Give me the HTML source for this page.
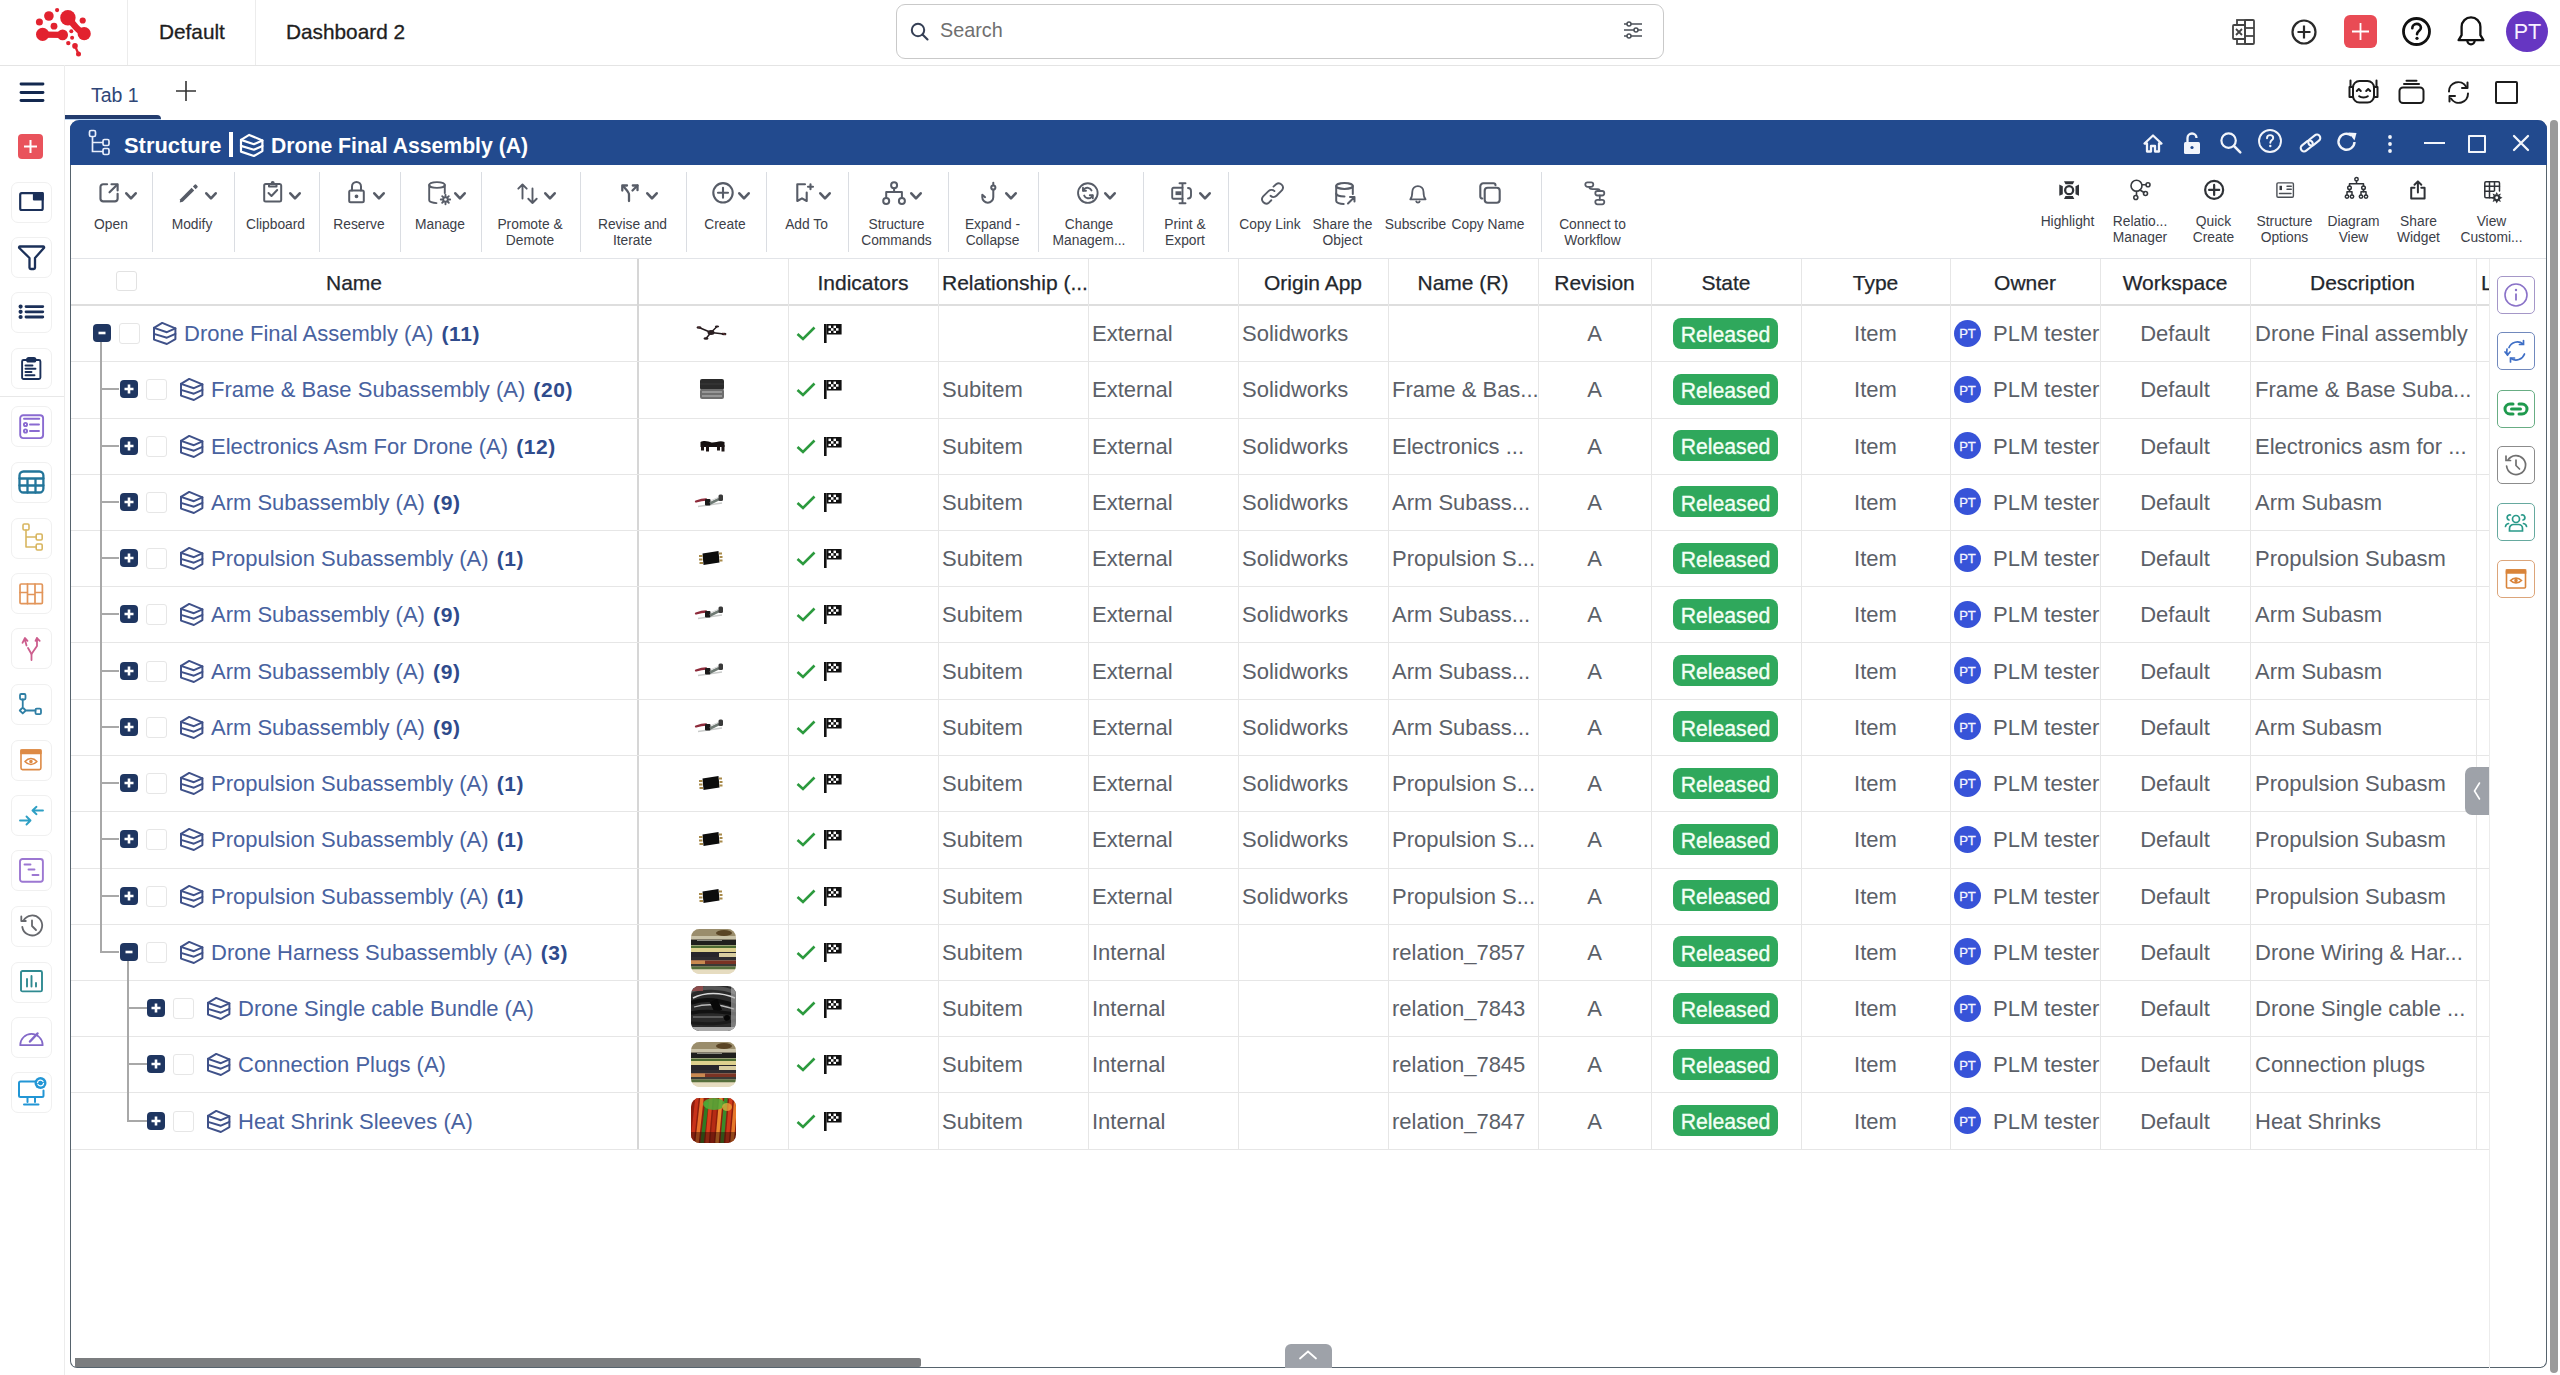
<!DOCTYPE html>
<html><head><meta charset="utf-8"><title>Structure</title>
<style>
html,body{margin:0;padding:0;}
body{width:2560px;height:1375px;position:relative;overflow:hidden;background:#fff;font-family:"Liberation Sans",sans-serif;}
.a{position:absolute;box-sizing:border-box;}
.t{position:absolute;line-height:1;white-space:nowrap;}
svg.a{overflow:visible;}
</style></head><body>
<div class="a" style="left:0px;top:65px;width:2560px;height:1px;background:#e4e4e4;"></div><div class="a" style="left:127px;top:0px;width:1px;height:65px;background:#ececec;"></div><div class="a" style="left:255px;top:0px;width:1px;height:65px;background:#ececec;"></div><svg class="a" style="left:30px;top:4px;" width="66" height="56" viewBox="0 0 66 56"><g fill="#e2222f" stroke="#e2222f">
<circle cx="27.1" cy="6.1" r="2.1" stroke="none"/>
<circle cx="18.9" cy="12" r="4.8" stroke="none"/>
<circle cx="9.4" cy="18.1" r="3.5" stroke="none"/>
<circle cx="24" cy="22.2" r="3.4" stroke="none"/>
<circle cx="37.9" cy="13.8" r="7.7" stroke="none"/>
<circle cx="52.7" cy="16.5" r="3.1" stroke="none"/>
<circle cx="54.2" cy="29.7" r="6.6" stroke="none"/>
<path d="M37.9 13.8 C44 20 46 26 54.2 29.7" fill="none" stroke-width="6.5" stroke-linecap="round"/>
<circle cx="12.6" cy="30.3" r="6.6" stroke="none"/>
<circle cx="32.6" cy="30.9" r="5.4" stroke="none"/>
<path d="M12.6 30.6 L32.6 30.9" stroke-width="6.2"/>
<circle cx="41.3" cy="27.3" r="2" stroke="none"/>
<circle cx="42.1" cy="33.8" r="2" stroke="none"/>
<circle cx="38.3" cy="39.1" r="2.2" stroke="none"/>
<circle cx="45" cy="41.9" r="2.8" stroke="none"/>
<circle cx="48.5" cy="50.1" r="2.5" stroke="none"/>
<path d="M45 41.9 L48.5 50.1" stroke-width="2.4"/>
</g></svg><div class="t " style="top:21.59px;font-size:20.8px;color:#1e1e1e;left:159.00px;-webkit-text-stroke:0.3px #1e1e1e;">Default</div><div class="t " style="top:21.59px;font-size:20.8px;color:#1e1e1e;left:286.00px;-webkit-text-stroke:0.3px #1e1e1e;">Dashboard 2</div><div class="a" style="left:896px;top:4px;width:768px;height:55px;border:1.5px solid #c9c9c9;border-radius:9px;background:#fff;"></div><svg class="a" style="left:910px;top:22px;" width="20" height="20" viewBox="0 0 20 20"><circle cx="8" cy="8" r="6.2" fill="none" stroke="#353f55" stroke-width="2"/><line x1="12.5" y1="12.5" x2="17.5" y2="17.5" stroke="#353f55" stroke-width="2.1" stroke-linecap="round"/></svg><div class="t " style="top:21.24px;font-size:19.8px;color:#6f6f6f;left:940.00px;">Search</div><svg class="a" style="left:1622px;top:20px;" width="22" height="22" viewBox="0 0 22 22"><g stroke="#4a4f57" stroke-width="1.5" fill="#fff"><line x1="2" y1="4" x2="20" y2="4"/><line x1="2" y1="10" x2="20" y2="10"/><line x1="2" y1="16" x2="20" y2="16"/><circle cx="7" cy="4" r="2"/><circle cx="14" cy="10" r="2"/><circle cx="7" cy="16" r="2"/></g></svg><svg class="a" style="left:2232px;top:19px;" width="25" height="26" viewBox="0 0 25 26"><g fill="none" stroke="#444" stroke-width="1.8"><rect x="1" y="6" width="12" height="14" rx="1"/><rect x="5" y="1" width="8" height="5"/><rect x="5" y="20" width="8" height="5"/><rect x="13" y="1" width="9" height="24" rx="1"/><line x1="13" y1="9" x2="22" y2="9"/><line x1="13" y1="17" x2="22" y2="17"/></g><path d="M4 10 L10 16 M10 10 L4 16" stroke="#444" stroke-width="1.8"/></svg><svg class="a" style="left:2291px;top:19px;" width="26" height="26" viewBox="0 0 26 26"><circle cx="13" cy="13" r="11.5" fill="none" stroke="#2a2a2a" stroke-width="2.2"/><path d="M13 6.5v13M6.5 13h13" stroke="#2a2a2a" stroke-width="2.2"/></svg><div class="a" style="left:2344px;top:15px;width:33px;height:33px;background:#e94b55;border-radius:6px;"></div><svg class="a" style="left:2344px;top:15px;" width="33" height="33" viewBox="0 0 33 33"><path d="M16.5 8v17M8 16.5h17" stroke="#fff" stroke-width="1.8"/></svg><svg class="a" style="left:2402px;top:17px;" width="29" height="29" viewBox="0 0 29 29"><circle cx="14.5" cy="14.5" r="13" fill="none" stroke="#111" stroke-width="2.8"/><path d="M10.3 11.2c0-2.6 1.9-4.3 4.3-4.3 2.5 0 4.3 1.7 4.3 3.9 0 2.8-3.6 3.1-3.9 6.4" fill="none" stroke="#111" stroke-width="2.6" stroke-linecap="round"/><circle cx="15" cy="21.3" r="1.6" fill="#111"/></svg><svg class="a" style="left:2457px;top:15px;" width="28" height="32" viewBox="0 0 28 32"><g fill="none" stroke="#111" stroke-width="2.3" stroke-linejoin="round"><path d="M1.6 25.2 L4.6 20.2 V11.8 A9.4 9.4 0 0 1 23.4 11.8 V20.2 L26.4 25.2 Z"/><path d="M10.3 25.6 A3.7 3.7 0 0 0 17.7 25.6"/></g></svg><div class="a" style="left:2506px;top:11px;width:42px;height:41px;background:#6636c2;border-radius:50%;"></div><div class="t " style="top:21.60px;font-size:21.5px;color:#f7f0ff;left:2497.50px;width:60px;text-align:center;">PT</div><div class="a" style="left:64px;top:65px;width:1px;height:1310px;background:#ececec;"></div><svg class="a" style="left:19px;top:81px;" width="26" height="22" viewBox="0 0 26 22"><g stroke="#13284f" stroke-width="2.8" stroke-linecap="round"><line x1="2" y1="3" x2="24" y2="3"/><line x1="2" y1="11.5" x2="24" y2="11.5"/><line x1="2" y1="19.5" x2="24" y2="19.5"/></g></svg><div class="a" style="left:18px;top:134px;width:25px;height:25px;background:#e9535c;border-radius:4px;"></div><svg class="a" style="left:18px;top:134px;" width="25" height="25" viewBox="0 0 25 25"><path d="M12.5 6v13M6 12.5h13" stroke="#fff" stroke-width="2"/></svg><div class="a" style="left:0px;top:396px;width:64px;height:1px;background:#e8e8e8;"></div><div class="a" style="left:11px;top:182px;width:41px;height:41px;border:1px solid #f0f0f0;border-radius:7px;background:#fff;"></div><div class="a" style="left:11px;top:237px;width:41px;height:41px;border:1px solid #f0f0f0;border-radius:7px;background:#fff;"></div><div class="a" style="left:11px;top:292px;width:41px;height:41px;border:1px solid #f0f0f0;border-radius:7px;background:#fff;"></div><div class="a" style="left:11px;top:348px;width:41px;height:41px;border:1px solid #f0f0f0;border-radius:7px;background:#fff;"></div><div class="a" style="left:11px;top:406px;width:41px;height:41px;border:1px solid #f0f0f0;border-radius:7px;background:#fff;"></div><div class="a" style="left:11px;top:462px;width:41px;height:41px;border:1px solid #f0f0f0;border-radius:7px;background:#fff;"></div><div class="a" style="left:11px;top:518px;width:41px;height:41px;border:1px solid #f0f0f0;border-radius:7px;background:#fff;"></div><div class="a" style="left:11px;top:573px;width:41px;height:41px;border:1px solid #f0f0f0;border-radius:7px;background:#fff;"></div><div class="a" style="left:11px;top:628px;width:41px;height:41px;border:1px solid #f0f0f0;border-radius:7px;background:#fff;"></div><div class="a" style="left:11px;top:684px;width:41px;height:41px;border:1px solid #f0f0f0;border-radius:7px;background:#fff;"></div><div class="a" style="left:11px;top:740px;width:41px;height:41px;border:1px solid #f0f0f0;border-radius:7px;background:#fff;"></div><div class="a" style="left:11px;top:795px;width:41px;height:41px;border:1px solid #f0f0f0;border-radius:7px;background:#fff;"></div><div class="a" style="left:11px;top:850px;width:41px;height:41px;border:1px solid #f0f0f0;border-radius:7px;background:#fff;"></div><div class="a" style="left:11px;top:906px;width:41px;height:41px;border:1px solid #f0f0f0;border-radius:7px;background:#fff;"></div><div class="a" style="left:11px;top:962px;width:41px;height:41px;border:1px solid #f0f0f0;border-radius:7px;background:#fff;"></div><div class="a" style="left:11px;top:1017px;width:41px;height:41px;border:1px solid #f0f0f0;border-radius:7px;background:#fff;"></div><div class="a" style="left:11px;top:1072px;width:41px;height:41px;border:1px solid #f0f0f0;border-radius:7px;background:#fff;"></div><div class="t " style="top:85.69px;font-size:19.5px;color:#2f4677;left:91.00px;">Tab 1</div><div class="a" style="left:65px;top:115px;width:96px;height:3.7px;background:#233c6e;border-radius:0 4px 0 0;"></div><div class="a" style="left:65px;top:118.7px;width:96px;height:1.3px;background:#b8d4f4;"></div><svg class="a" style="left:175px;top:80px;" width="22" height="22" viewBox="0 0 22 22"><path d="M11 1v20M1 11h20" stroke="#333" stroke-width="1.6"/></svg><svg class="a" style="left:2347px;top:79px;" width="33" height="25" viewBox="0 0 33 25"><g fill="none" stroke="#1c1c1c" stroke-width="2" stroke-linecap="round" stroke-linejoin="round"><rect x="6" y="2" width="21" height="21.5" rx="6.5"/><path d="M6 8H2.5v10H6M27 8h3.5v10H27"/><path d="M3.5 8V1.5M29.5 8V1.5"/><path d="M12.2 17.2c1.8 1.6 6.8 1.6 8.6 0"/><path d="M9.8 12l2-2 2 2M19.2 12l2-2 2 2"/></g></svg><svg class="a" style="left:2398px;top:79px;" width="27" height="25" viewBox="0 0 27 25"><g fill="none" stroke="#1c1c1c" stroke-width="2" stroke-linecap="round"><rect x="1.5" y="8.5" width="24" height="15.5" rx="3.5"/><line x1="6" y1="5" x2="21" y2="5"/><line x1="8.5" y1="1.8" x2="18.5" y2="1.8"/></g></svg><svg class="a" style="left:2447px;top:81px;" width="24" height="22" viewBox="0 0 24 22"><g fill="none" stroke="#1c1c1c" stroke-width="2" stroke-linecap="round" stroke-linejoin="round"><path d="M2 10.5A9.2 9.2 0 0 1 19 5.5"/><path d="M20.5 1.5v5.5h-5.5"/><path d="M21 12.5A9.2 9.2 0 0 1 4 17.5"/><path d="M2.5 20.5v-5.5h5.5"/></g></svg><div class="a" style="left:2495px;top:81px;width:23px;height:23px;border:2.2px solid #1c1c1c;border-radius:2px;"></div><div class="a" style="left:70px;top:120px;width:2477px;height:1248px;border:1.4px solid #56636d;border-top:none;border-radius:9px 9px 7px 7px;background:#fff;"></div><div class="a" style="left:70px;top:120px;width:2477px;height:45px;background:#224a8e;border-radius:9px 9px 0 0;"></div><svg class="a" style="left:88px;top:129px;" width="24" height="27" viewBox="0 0 24 27"><g fill="none" stroke="#e8eefb" stroke-width="1.7"><rect x="1.5" y="1.5" width="6" height="6" rx="1.5"/><rect x="15" y="10.5" width="6" height="6" rx="1.5"/><rect x="15" y="19.5" width="6" height="6" rx="1.5"/><path d="M4.5 7.5V22.5H15M4.5 13.5H15"/></g></svg><div class="t " style="top:134.66px;font-size:21.9px;color:#ffffff;font-weight:bold;left:124.00px;">Structure</div><div class="a" style="left:229px;top:132px;width:3.5px;height:25px;background:#fff;"></div><svg class="a" style="left:240px;top:134px;" width="24" height="23" viewBox="0 0 24 23"><g fill="none" stroke="#fff" stroke-width="2.2" stroke-linejoin="round" stroke-linecap="round"><path d="M9.2 0.9 L22.4 6.4 L22.4 17.1 L13.9 22 L1 17.6 L1 5.9 Z"/><path d="M1 5.9 L13.9 10.2 L22.4 6.4"/><path d="M1 11.9 L13.9 15.7 L22.4 11.9"/></g></svg><div class="t " style="top:135.25px;font-size:21.2px;color:#ffffff;font-weight:bold;left:271.00px;">Drone Final Assembly (A)</div><svg class="a" style="left:2143px;top:134px;" width="20" height="19" viewBox="0 0 20 19"><path d="M10 1.5 L18.5 9.5 H16 V17.5 H12 V12 H8 V17.5 H4 V9.5 H1.5 Z" fill="none" stroke="#f2f5fb" stroke-width="2.3" stroke-linejoin="round"/></svg><svg class="a" style="left:2183px;top:132px;" width="18" height="23" viewBox="0 0 18 23"><path d="M4.5 10V6a4.5 4.5 0 0 1 9 0" fill="none" stroke="#f2f5fb" stroke-width="2.3"/><rect x="1" y="10" width="16" height="12" rx="1.5" fill="#f2f5fb"/><circle cx="9" cy="15.5" r="1.6" fill="#224a8e"/></svg><svg class="a" style="left:2220px;top:132px;" width="22" height="22" viewBox="0 0 22 22"><circle cx="8.6" cy="8.6" r="7.2" fill="none" stroke="#f2f5fb" stroke-width="2.2"/><line x1="14" y1="14" x2="20.3" y2="20.3" stroke="#f2f5fb" stroke-width="2.5" stroke-linecap="round"/></svg><svg class="a" style="left:2258px;top:129px;" width="24" height="24" viewBox="0 0 24 24"><circle cx="12" cy="12" r="11" fill="none" stroke="#f2f5fb" stroke-width="1.9"/><path d="M9 9.2c0-1.9 1.4-3.1 3.1-3.1 1.8 0 3.1 1.2 3.1 2.8 0 2.1-2.7 2.2-2.9 4.8" fill="none" stroke="#f2f5fb" stroke-width="1.9" stroke-linecap="round"/><circle cx="12.3" cy="17" r="1.2" fill="#f2f5fb"/></svg><svg class="a" style="left:2298px;top:132px;" width="25" height="22" viewBox="0 0 25 22"><g fill="none" stroke="#f2f5fb" stroke-width="2.1" transform="rotate(-38 12.5 11)"><rect x="1" y="7.6" width="13.5" height="6.8" rx="3.4"/><rect x="10.5" y="7.6" width="13.5" height="6.8" rx="3.4"/></g></svg><svg class="a" style="left:2336px;top:131px;" width="22" height="22" viewBox="0 0 22 22"><path d="M18.5 11 A8 8 0 1 1 15.5 4.5" fill="none" stroke="#f2f5fb" stroke-width="2.4"/><path d="M12.5 1.5 L20.5 2 L18.5 9.5 Z" fill="#f2f5fb"/></svg><svg class="a" style="left:2386px;top:134px;" width="8" height="20" viewBox="0 0 8 20"><g fill="#f2f5fb"><circle cx="4" cy="3" r="1.9"/><circle cx="4" cy="10" r="1.9"/><circle cx="4" cy="17" r="1.9"/></g></svg><div class="a" style="left:2424px;top:142px;width:21px;height:2.4px;background:#f2f5fb;"></div><div class="a" style="left:2468px;top:135px;width:18px;height:18px;border:2.3px solid #f2f5fb;border-radius:1px;"></div><svg class="a" style="left:2512px;top:134px;" width="18" height="18" viewBox="0 0 18 18"><path d="M2 2L16 16M16 2L2 16" stroke="#f2f5fb" stroke-width="2.3" stroke-linecap="round"/></svg><div class="a" style="left:71px;top:258px;width:2475px;height:1px;background:#e2e4e8;"></div><div class="a" style="left:152px;top:172px;width:1px;height:80px;background:#dadde2;"></div><div class="a" style="left:234px;top:172px;width:1px;height:80px;background:#dadde2;"></div><div class="a" style="left:319px;top:172px;width:1px;height:80px;background:#dadde2;"></div><div class="a" style="left:400px;top:172px;width:1px;height:80px;background:#dadde2;"></div><div class="a" style="left:481px;top:172px;width:1px;height:80px;background:#dadde2;"></div><div class="a" style="left:580px;top:172px;width:1px;height:80px;background:#dadde2;"></div><div class="a" style="left:686px;top:172px;width:1px;height:80px;background:#dadde2;"></div><div class="a" style="left:766px;top:172px;width:1px;height:80px;background:#dadde2;"></div><div class="a" style="left:848px;top:172px;width:1px;height:80px;background:#dadde2;"></div><div class="a" style="left:948px;top:172px;width:1px;height:80px;background:#dadde2;"></div><div class="a" style="left:1038px;top:172px;width:1px;height:80px;background:#dadde2;"></div><div class="a" style="left:1143px;top:172px;width:1px;height:80px;background:#dadde2;"></div><div class="a" style="left:1228px;top:172px;width:1px;height:80px;background:#dadde2;"></div><div class="a" style="left:1541px;top:172px;width:1px;height:80px;background:#dadde2;"></div><div class="t " style="top:217.52px;font-size:13.8px;color:#3c4048;left:41.00px;width:140px;text-align:center;">Open</div><div class="t " style="top:217.52px;font-size:13.8px;color:#3c4048;left:122.00px;width:140px;text-align:center;">Modify</div><div class="t " style="top:217.52px;font-size:13.8px;color:#3c4048;left:205.50px;width:140px;text-align:center;">Clipboard</div><div class="t " style="top:217.52px;font-size:13.8px;color:#3c4048;left:289.00px;width:140px;text-align:center;">Reserve</div><div class="t " style="top:217.52px;font-size:13.8px;color:#3c4048;left:370.00px;width:140px;text-align:center;">Manage</div><div class="t " style="top:217.52px;font-size:13.8px;color:#3c4048;left:460.00px;width:140px;text-align:center;">Promote &amp;</div><div class="t " style="top:233.52px;font-size:13.8px;color:#3c4048;left:460.00px;width:140px;text-align:center;">Demote</div><div class="t " style="top:217.52px;font-size:13.8px;color:#3c4048;left:562.50px;width:140px;text-align:center;">Revise and</div><div class="t " style="top:233.52px;font-size:13.8px;color:#3c4048;left:562.50px;width:140px;text-align:center;">Iterate</div><div class="t " style="top:217.52px;font-size:13.8px;color:#3c4048;left:655.00px;width:140px;text-align:center;">Create</div><div class="t " style="top:217.52px;font-size:13.8px;color:#3c4048;left:736.50px;width:140px;text-align:center;">Add To</div><div class="t " style="top:217.52px;font-size:13.8px;color:#3c4048;left:826.50px;width:140px;text-align:center;">Structure</div><div class="t " style="top:233.52px;font-size:13.8px;color:#3c4048;left:826.50px;width:140px;text-align:center;">Commands</div><div class="t " style="top:217.52px;font-size:13.8px;color:#3c4048;left:922.50px;width:140px;text-align:center;">Expand -</div><div class="t " style="top:233.52px;font-size:13.8px;color:#3c4048;left:922.50px;width:140px;text-align:center;">Collapse</div><div class="t " style="top:217.52px;font-size:13.8px;color:#3c4048;left:1019.00px;width:140px;text-align:center;">Change</div><div class="t " style="top:233.52px;font-size:13.8px;color:#3c4048;left:1019.00px;width:140px;text-align:center;">Managem...</div><div class="t " style="top:217.52px;font-size:13.8px;color:#3c4048;left:1115.00px;width:140px;text-align:center;">Print &amp;</div><div class="t " style="top:233.52px;font-size:13.8px;color:#3c4048;left:1115.00px;width:140px;text-align:center;">Export</div><div class="t " style="top:217.52px;font-size:13.8px;color:#3c4048;left:1200.00px;width:140px;text-align:center;">Copy Link</div><div class="t " style="top:217.52px;font-size:13.8px;color:#3c4048;left:1272.50px;width:140px;text-align:center;">Share the</div><div class="t " style="top:233.52px;font-size:13.8px;color:#3c4048;left:1272.50px;width:140px;text-align:center;">Object</div><div class="t " style="top:217.52px;font-size:13.8px;color:#3c4048;left:1345.50px;width:140px;text-align:center;">Subscribe</div><div class="t " style="top:217.52px;font-size:13.8px;color:#3c4048;left:1418.00px;width:140px;text-align:center;">Copy Name</div><div class="t " style="top:217.52px;font-size:13.8px;color:#3c4048;left:1522.50px;width:140px;text-align:center;">Connect to</div><div class="t " style="top:233.52px;font-size:13.8px;color:#3c4048;left:1522.50px;width:140px;text-align:center;">Workflow</div><div class="t " style="top:215.02px;font-size:13.8px;color:#3c4048;left:1997.50px;width:140px;text-align:center;">Highlight</div><div class="t " style="top:215.02px;font-size:13.8px;color:#3c4048;left:2070.00px;width:140px;text-align:center;">Relatio...</div><div class="t " style="top:231.02px;font-size:13.8px;color:#3c4048;left:2070.00px;width:140px;text-align:center;">Manager</div><div class="t " style="top:215.02px;font-size:13.8px;color:#3c4048;left:2143.50px;width:140px;text-align:center;">Quick</div><div class="t " style="top:231.02px;font-size:13.8px;color:#3c4048;left:2143.50px;width:140px;text-align:center;">Create</div><div class="t " style="top:215.02px;font-size:13.8px;color:#3c4048;left:2214.50px;width:140px;text-align:center;">Structure</div><div class="t " style="top:231.02px;font-size:13.8px;color:#3c4048;left:2214.50px;width:140px;text-align:center;">Options</div><div class="t " style="top:215.02px;font-size:13.8px;color:#3c4048;left:2283.50px;width:140px;text-align:center;">Diagram</div><div class="t " style="top:231.02px;font-size:13.8px;color:#3c4048;left:2283.50px;width:140px;text-align:center;">View</div><div class="t " style="top:215.02px;font-size:13.8px;color:#3c4048;left:2348.50px;width:140px;text-align:center;">Share</div><div class="t " style="top:231.02px;font-size:13.8px;color:#3c4048;left:2348.50px;width:140px;text-align:center;">Widget</div><div class="t " style="top:215.02px;font-size:13.8px;color:#3c4048;left:2421.50px;width:140px;text-align:center;">View</div><div class="t " style="top:231.02px;font-size:13.8px;color:#3c4048;left:2421.50px;width:140px;text-align:center;">Customi...</div><div class="a" style="left:71px;top:304px;width:2418px;height:2px;background:#dedede;"></div><div class="a" style="left:637px;top:258.5px;width:2px;height:890.25px;background:#d6d6d6;"></div><div class="a" style="left:788px;top:258.5px;width:1px;height:890.25px;background:#e6e6e6;"></div><div class="a" style="left:938px;top:258.5px;width:1px;height:890.25px;background:#e6e6e6;"></div><div class="a" style="left:1088px;top:258.5px;width:1px;height:890.25px;background:#e6e6e6;"></div><div class="a" style="left:1238px;top:258.5px;width:1px;height:890.25px;background:#e6e6e6;"></div><div class="a" style="left:1388px;top:258.5px;width:1px;height:890.25px;background:#e6e6e6;"></div><div class="a" style="left:1538px;top:258.5px;width:1px;height:890.25px;background:#e6e6e6;"></div><div class="a" style="left:1651px;top:258.5px;width:1px;height:890.25px;background:#e6e6e6;"></div><div class="a" style="left:1801px;top:258.5px;width:1px;height:890.25px;background:#e6e6e6;"></div><div class="a" style="left:1950px;top:258.5px;width:1px;height:890.25px;background:#e6e6e6;"></div><div class="a" style="left:2100px;top:258.5px;width:1px;height:890.25px;background:#e6e6e6;"></div><div class="a" style="left:2250px;top:258.5px;width:1px;height:890.25px;background:#e6e6e6;"></div><div class="a" style="left:2476px;top:258.5px;width:1px;height:890.25px;background:#e6e6e6;"></div><div class="a" style="left:2489px;top:258.5px;width:1px;height:1109.5px;background:#ececec;"></div><div class="a" style="left:71px;top:361px;width:2418px;height:1px;background:#e6e6e6;"></div><div class="a" style="left:71px;top:418px;width:2418px;height:1px;background:#e6e6e6;"></div><div class="a" style="left:71px;top:474px;width:2418px;height:1px;background:#e6e6e6;"></div><div class="a" style="left:71px;top:530px;width:2418px;height:1px;background:#e6e6e6;"></div><div class="a" style="left:71px;top:586px;width:2418px;height:1px;background:#e6e6e6;"></div><div class="a" style="left:71px;top:642px;width:2418px;height:1px;background:#e6e6e6;"></div><div class="a" style="left:71px;top:699px;width:2418px;height:1px;background:#e6e6e6;"></div><div class="a" style="left:71px;top:755px;width:2418px;height:1px;background:#e6e6e6;"></div><div class="a" style="left:71px;top:811px;width:2418px;height:1px;background:#e6e6e6;"></div><div class="a" style="left:71px;top:868px;width:2418px;height:1px;background:#e6e6e6;"></div><div class="a" style="left:71px;top:924px;width:2418px;height:1px;background:#e6e6e6;"></div><div class="a" style="left:71px;top:980px;width:2418px;height:1px;background:#e6e6e6;"></div><div class="a" style="left:71px;top:1036px;width:2418px;height:1px;background:#e6e6e6;"></div><div class="a" style="left:71px;top:1092px;width:2418px;height:1px;background:#e6e6e6;"></div><div class="a" style="left:71px;top:1149px;width:2418px;height:1px;background:#e6e6e6;"></div><div class="t " style="top:272.22px;font-size:21px;color:#23272d;left:254.00px;width:200px;text-align:center;-webkit-text-stroke:0.25px #23272d;">Name</div><div class="a" style="left:116px;top:271px;width:21px;height:20px;border:1.3px solid #e2e2e2;border-radius:3px;"></div><div class="t " style="top:272.22px;font-size:21px;color:#23272d;left:788.00px;width:150px;text-align:center;-webkit-text-stroke:0.25px #23272d;">Indicators</div><div class="t " style="top:272.22px;font-size:21px;color:#23272d;left:942.00px;-webkit-text-stroke:0.25px #23272d;">Relationship (...</div><div class="t " style="top:272.22px;font-size:21px;color:#23272d;left:1238.00px;width:150px;text-align:center;-webkit-text-stroke:0.25px #23272d;">Origin App</div><div class="t " style="top:272.22px;font-size:21px;color:#23272d;left:1388.00px;width:150px;text-align:center;-webkit-text-stroke:0.25px #23272d;">Name (R)</div><div class="t " style="top:272.22px;font-size:21px;color:#23272d;left:1538.00px;width:113px;text-align:center;-webkit-text-stroke:0.25px #23272d;">Revision</div><div class="t " style="top:272.22px;font-size:21px;color:#23272d;left:1651.00px;width:150px;text-align:center;-webkit-text-stroke:0.25px #23272d;">State</div><div class="t " style="top:272.22px;font-size:21px;color:#23272d;left:1800.50px;width:150px;text-align:center;-webkit-text-stroke:0.25px #23272d;">Type</div><div class="t " style="top:272.22px;font-size:21px;color:#23272d;left:1950.00px;width:150px;text-align:center;-webkit-text-stroke:0.25px #23272d;">Owner</div><div class="t " style="top:272.22px;font-size:21px;color:#23272d;left:2100.00px;width:150px;text-align:center;-webkit-text-stroke:0.25px #23272d;">Workspace</div><div class="t " style="top:272.22px;font-size:21px;color:#23272d;left:2250.00px;width:225px;text-align:center;-webkit-text-stroke:0.25px #23272d;">Description</div><div class="t " style="top:272.22px;font-size:21px;color:#23272d;left:2481.00px;width:8px;overflow:hidden;white-space:nowrap;-webkit-text-stroke:0.25px #23272d;">L</div><div class="a" style="left:99.5px;top:342px;width:2px;height:610px;background:#a8a8a8;"></div><div class="a" style="left:100px;top:388px;width:19px;height:2px;background:#a8a8a8;"></div><div class="a" style="left:100px;top:445px;width:19px;height:2px;background:#a8a8a8;"></div><div class="a" style="left:100px;top:501px;width:19px;height:2px;background:#a8a8a8;"></div><div class="a" style="left:100px;top:557px;width:19px;height:2px;background:#a8a8a8;"></div><div class="a" style="left:100px;top:613px;width:19px;height:2px;background:#a8a8a8;"></div><div class="a" style="left:100px;top:670px;width:19px;height:2px;background:#a8a8a8;"></div><div class="a" style="left:100px;top:726px;width:19px;height:2px;background:#a8a8a8;"></div><div class="a" style="left:100px;top:782px;width:19px;height:2px;background:#a8a8a8;"></div><div class="a" style="left:100px;top:838px;width:19px;height:2px;background:#a8a8a8;"></div><div class="a" style="left:100px;top:895px;width:19px;height:2px;background:#a8a8a8;"></div><div class="a" style="left:100px;top:951px;width:19px;height:2px;background:#a8a8a8;"></div><div class="a" style="left:126.5px;top:961px;width:2px;height:160px;background:#a8a8a8;"></div><div class="a" style="left:127px;top:1007px;width:20px;height:2px;background:#a8a8a8;"></div><div class="a" style="left:127px;top:1063px;width:20px;height:2px;background:#a8a8a8;"></div><div class="a" style="left:127px;top:1120px;width:20px;height:2px;background:#a8a8a8;"></div><div class="a" style="left:92.5px;top:324px;width:18px;height:18px;background:#1f3661;border-radius:4px;"></div><svg class="a" style="left:92.5px;top:324px;" width="18" height="18" viewBox="0 0 18 18"><path d="M5.5 9h7" stroke="#fff" stroke-width="2.6"/></svg><div class="a" style="left:118.5px;top:323px;width:21px;height:21px;border:1.3px solid #e6e6e6;border-radius:3px;background:#fff;"></div><svg class="a" style="left:153.0px;top:322px;" width="24" height="23" viewBox="0 0 24 23"><g fill="none" stroke="#3f5189" stroke-width="2" stroke-linejoin="round" stroke-linecap="round"><path d="M9.2 0.9 L22.4 6.4 L22.4 17.1 L13.9 22 L1 17.6 L1 5.9 Z"/><path d="M1 5.9 L13.9 10.2 L22.4 6.4"/><path d="M1 11.9 L13.9 15.7 L22.4 11.9"/></g></svg><div class="t " style="top:323.20px;font-size:22px;color:#4862a0;left:184.00px;">Drone Final Assembly (A) <b style="color:#2f4b8c;font-size:21px;letter-spacing:0.6px;margin-left:2px">(11)</b></div><svg class="a" style="left:796px;top:326px;" width="20" height="15" viewBox="0 0 20 15"><path d="M1.5 8 L7 13 L18.5 1.5" fill="none" stroke="#2c9a3e" stroke-width="2.6"/></svg><svg class="a" style="left:824px;top:323px;" width="18" height="20" viewBox="0 0 18 20"><rect x="0" y="1" width="2.6" height="19" fill="#111"/><rect x="2.6" y="1" width="15" height="10.5" fill="#111"/><g fill="#fff"><rect x="4.5" y="2.6" width="2.5" height="2.5"/><rect x="9.5" y="2.6" width="2.5" height="2.5"/><rect x="7" y="5.2" width="2.5" height="2.5"/><rect x="12" y="5.2" width="2.5" height="2.5"/><rect x="4.5" y="7.8" width="2.5" height="2.2"/><rect x="9.5" y="7.8" width="2.5" height="2.2"/></g></svg><div class="t " style="top:323.20px;font-size:22px;color:#5b6068;left:1092.00px;">External</div><div class="t " style="top:323.20px;font-size:22px;color:#5b6068;left:1242.00px;">Solidworks</div><div class="t " style="top:323.20px;font-size:22px;color:#5b6068;left:1544.50px;width:100px;text-align:center;">A</div><div class="a" style="left:1673px;top:318px;width:105px;height:31px;background:#2fa85c;border-radius:8px;"></div><div class="t " style="top:323.88px;font-size:21.2px;color:#f2fff5;left:1673.00px;width:105px;text-align:center;-webkit-text-stroke:0.35px #f2fff5;">Released</div><div class="t " style="top:323.20px;font-size:22px;color:#5b6068;left:1805.50px;width:140px;text-align:center;">Item</div><div class="a" style="left:1954px;top:320px;width:27px;height:27px;background:#3753d8;border-radius:50%;"></div><div class="t " style="top:327.32px;font-size:13px;color:#f4f6ff;left:1952.50px;width:30px;text-align:center;-webkit-text-stroke:0.3px #f4f6ff;">PT</div><div class="t " style="top:323.20px;font-size:22px;color:#5b6068;left:1993.00px;width:107px;overflow:hidden;white-space:nowrap;">PLM tester</div><div class="t " style="top:323.20px;font-size:22px;color:#5b6068;left:2105.00px;width:140px;text-align:center;">Default</div><div class="t " style="top:323.20px;font-size:22px;color:#5b6068;left:2255.00px;">Drone Final assembly</div><div class="a" style="left:119.5px;top:380px;width:18px;height:18px;background:#1f3661;border-radius:4px;"></div><svg class="a" style="left:119.5px;top:380px;" width="18" height="18" viewBox="0 0 18 18"><path d="M9 4.5v9M4.5 9h9" stroke="#fff" stroke-width="2.6"/></svg><div class="a" style="left:145.5px;top:379px;width:21px;height:21px;border:1.3px solid #e6e6e6;border-radius:3px;background:#fff;"></div><svg class="a" style="left:180.0px;top:378px;" width="24" height="23" viewBox="0 0 24 23"><g fill="none" stroke="#3f5189" stroke-width="2" stroke-linejoin="round" stroke-linecap="round"><path d="M9.2 0.9 L22.4 6.4 L22.4 17.1 L13.9 22 L1 17.6 L1 5.9 Z"/><path d="M1 5.9 L13.9 10.2 L22.4 6.4"/><path d="M1 11.9 L13.9 15.7 L22.4 11.9"/></g></svg><div class="t " style="top:379.45px;font-size:22px;color:#4862a0;left:211.00px;">Frame &amp; Base Subassembly (A) <b style="color:#2f4b8c;font-size:21px;letter-spacing:0.6px;margin-left:2px">(20)</b></div><svg class="a" style="left:796px;top:382px;" width="20" height="15" viewBox="0 0 20 15"><path d="M1.5 8 L7 13 L18.5 1.5" fill="none" stroke="#2c9a3e" stroke-width="2.6"/></svg><svg class="a" style="left:824px;top:379px;" width="18" height="20" viewBox="0 0 18 20"><rect x="0" y="1" width="2.6" height="19" fill="#111"/><rect x="2.6" y="1" width="15" height="10.5" fill="#111"/><g fill="#fff"><rect x="4.5" y="2.6" width="2.5" height="2.5"/><rect x="9.5" y="2.6" width="2.5" height="2.5"/><rect x="7" y="5.2" width="2.5" height="2.5"/><rect x="12" y="5.2" width="2.5" height="2.5"/><rect x="4.5" y="7.8" width="2.5" height="2.2"/><rect x="9.5" y="7.8" width="2.5" height="2.2"/></g></svg><div class="t " style="top:379.45px;font-size:22px;color:#5b6068;left:942.00px;">Subitem</div><div class="t " style="top:379.45px;font-size:22px;color:#5b6068;left:1092.00px;">External</div><div class="t " style="top:379.45px;font-size:22px;color:#5b6068;left:1242.00px;">Solidworks</div><div class="t " style="top:379.45px;font-size:22px;color:#5b6068;left:1392.00px;">Frame &amp; Bas...</div><div class="t " style="top:379.45px;font-size:22px;color:#5b6068;left:1544.50px;width:100px;text-align:center;">A</div><div class="a" style="left:1673px;top:374px;width:105px;height:31px;background:#2fa85c;border-radius:8px;"></div><div class="t " style="top:380.13px;font-size:21.2px;color:#f2fff5;left:1673.00px;width:105px;text-align:center;-webkit-text-stroke:0.35px #f2fff5;">Released</div><div class="t " style="top:379.45px;font-size:22px;color:#5b6068;left:1805.50px;width:140px;text-align:center;">Item</div><div class="a" style="left:1954px;top:376px;width:27px;height:27px;background:#3753d8;border-radius:50%;"></div><div class="t " style="top:383.57px;font-size:13px;color:#f4f6ff;left:1952.50px;width:30px;text-align:center;-webkit-text-stroke:0.3px #f4f6ff;">PT</div><div class="t " style="top:379.45px;font-size:22px;color:#5b6068;left:1993.00px;width:107px;overflow:hidden;white-space:nowrap;">PLM tester</div><div class="t " style="top:379.45px;font-size:22px;color:#5b6068;left:2105.00px;width:140px;text-align:center;">Default</div><div class="t " style="top:379.45px;font-size:22px;color:#5b6068;left:2255.00px;">Frame &amp; Base Suba...</div><div class="a" style="left:119.5px;top:437px;width:18px;height:18px;background:#1f3661;border-radius:4px;"></div><svg class="a" style="left:119.5px;top:437px;" width="18" height="18" viewBox="0 0 18 18"><path d="M9 4.5v9M4.5 9h9" stroke="#fff" stroke-width="2.6"/></svg><div class="a" style="left:145.5px;top:436px;width:21px;height:21px;border:1.3px solid #e6e6e6;border-radius:3px;background:#fff;"></div><svg class="a" style="left:180.0px;top:435px;" width="24" height="23" viewBox="0 0 24 23"><g fill="none" stroke="#3f5189" stroke-width="2" stroke-linejoin="round" stroke-linecap="round"><path d="M9.2 0.9 L22.4 6.4 L22.4 17.1 L13.9 22 L1 17.6 L1 5.9 Z"/><path d="M1 5.9 L13.9 10.2 L22.4 6.4"/><path d="M1 11.9 L13.9 15.7 L22.4 11.9"/></g></svg><div class="t " style="top:435.70px;font-size:22px;color:#4862a0;left:211.00px;">Electronics Asm For Drone (A) <b style="color:#2f4b8c;font-size:21px;letter-spacing:0.6px;margin-left:2px">(12)</b></div><svg class="a" style="left:796px;top:439px;" width="20" height="15" viewBox="0 0 20 15"><path d="M1.5 8 L7 13 L18.5 1.5" fill="none" stroke="#2c9a3e" stroke-width="2.6"/></svg><svg class="a" style="left:824px;top:436px;" width="18" height="20" viewBox="0 0 18 20"><rect x="0" y="1" width="2.6" height="19" fill="#111"/><rect x="2.6" y="1" width="15" height="10.5" fill="#111"/><g fill="#fff"><rect x="4.5" y="2.6" width="2.5" height="2.5"/><rect x="9.5" y="2.6" width="2.5" height="2.5"/><rect x="7" y="5.2" width="2.5" height="2.5"/><rect x="12" y="5.2" width="2.5" height="2.5"/><rect x="4.5" y="7.8" width="2.5" height="2.2"/><rect x="9.5" y="7.8" width="2.5" height="2.2"/></g></svg><div class="t " style="top:435.70px;font-size:22px;color:#5b6068;left:942.00px;">Subitem</div><div class="t " style="top:435.70px;font-size:22px;color:#5b6068;left:1092.00px;">External</div><div class="t " style="top:435.70px;font-size:22px;color:#5b6068;left:1242.00px;">Solidworks</div><div class="t " style="top:435.70px;font-size:22px;color:#5b6068;left:1392.00px;">Electronics ...</div><div class="t " style="top:435.70px;font-size:22px;color:#5b6068;left:1544.50px;width:100px;text-align:center;">A</div><div class="a" style="left:1673px;top:430px;width:105px;height:31px;background:#2fa85c;border-radius:8px;"></div><div class="t " style="top:436.38px;font-size:21.2px;color:#f2fff5;left:1673.00px;width:105px;text-align:center;-webkit-text-stroke:0.35px #f2fff5;">Released</div><div class="t " style="top:435.70px;font-size:22px;color:#5b6068;left:1805.50px;width:140px;text-align:center;">Item</div><div class="a" style="left:1954px;top:432px;width:27px;height:27px;background:#3753d8;border-radius:50%;"></div><div class="t " style="top:439.82px;font-size:13px;color:#f4f6ff;left:1952.50px;width:30px;text-align:center;-webkit-text-stroke:0.3px #f4f6ff;">PT</div><div class="t " style="top:435.70px;font-size:22px;color:#5b6068;left:1993.00px;width:107px;overflow:hidden;white-space:nowrap;">PLM tester</div><div class="t " style="top:435.70px;font-size:22px;color:#5b6068;left:2105.00px;width:140px;text-align:center;">Default</div><div class="t " style="top:435.70px;font-size:22px;color:#5b6068;left:2255.00px;">Electronics asm for ...</div><div class="a" style="left:119.5px;top:493px;width:18px;height:18px;background:#1f3661;border-radius:4px;"></div><svg class="a" style="left:119.5px;top:493px;" width="18" height="18" viewBox="0 0 18 18"><path d="M9 4.5v9M4.5 9h9" stroke="#fff" stroke-width="2.6"/></svg><div class="a" style="left:145.5px;top:492px;width:21px;height:21px;border:1.3px solid #e6e6e6;border-radius:3px;background:#fff;"></div><svg class="a" style="left:180.0px;top:491px;" width="24" height="23" viewBox="0 0 24 23"><g fill="none" stroke="#3f5189" stroke-width="2" stroke-linejoin="round" stroke-linecap="round"><path d="M9.2 0.9 L22.4 6.4 L22.4 17.1 L13.9 22 L1 17.6 L1 5.9 Z"/><path d="M1 5.9 L13.9 10.2 L22.4 6.4"/><path d="M1 11.9 L13.9 15.7 L22.4 11.9"/></g></svg><div class="t " style="top:491.95px;font-size:22px;color:#4862a0;left:211.00px;">Arm Subassembly (A) <b style="color:#2f4b8c;font-size:21px;letter-spacing:0.6px;margin-left:2px">(9)</b></div><svg class="a" style="left:796px;top:495px;" width="20" height="15" viewBox="0 0 20 15"><path d="M1.5 8 L7 13 L18.5 1.5" fill="none" stroke="#2c9a3e" stroke-width="2.6"/></svg><svg class="a" style="left:824px;top:492px;" width="18" height="20" viewBox="0 0 18 20"><rect x="0" y="1" width="2.6" height="19" fill="#111"/><rect x="2.6" y="1" width="15" height="10.5" fill="#111"/><g fill="#fff"><rect x="4.5" y="2.6" width="2.5" height="2.5"/><rect x="9.5" y="2.6" width="2.5" height="2.5"/><rect x="7" y="5.2" width="2.5" height="2.5"/><rect x="12" y="5.2" width="2.5" height="2.5"/><rect x="4.5" y="7.8" width="2.5" height="2.2"/><rect x="9.5" y="7.8" width="2.5" height="2.2"/></g></svg><div class="t " style="top:491.95px;font-size:22px;color:#5b6068;left:942.00px;">Subitem</div><div class="t " style="top:491.95px;font-size:22px;color:#5b6068;left:1092.00px;">External</div><div class="t " style="top:491.95px;font-size:22px;color:#5b6068;left:1242.00px;">Solidworks</div><div class="t " style="top:491.95px;font-size:22px;color:#5b6068;left:1392.00px;">Arm Subass...</div><div class="t " style="top:491.95px;font-size:22px;color:#5b6068;left:1544.50px;width:100px;text-align:center;">A</div><div class="a" style="left:1673px;top:486px;width:105px;height:31px;background:#2fa85c;border-radius:8px;"></div><div class="t " style="top:492.63px;font-size:21.2px;color:#f2fff5;left:1673.00px;width:105px;text-align:center;-webkit-text-stroke:0.35px #f2fff5;">Released</div><div class="t " style="top:491.95px;font-size:22px;color:#5b6068;left:1805.50px;width:140px;text-align:center;">Item</div><div class="a" style="left:1954px;top:488px;width:27px;height:27px;background:#3753d8;border-radius:50%;"></div><div class="t " style="top:496.07px;font-size:13px;color:#f4f6ff;left:1952.50px;width:30px;text-align:center;-webkit-text-stroke:0.3px #f4f6ff;">PT</div><div class="t " style="top:491.95px;font-size:22px;color:#5b6068;left:1993.00px;width:107px;overflow:hidden;white-space:nowrap;">PLM tester</div><div class="t " style="top:491.95px;font-size:22px;color:#5b6068;left:2105.00px;width:140px;text-align:center;">Default</div><div class="t " style="top:491.95px;font-size:22px;color:#5b6068;left:2255.00px;">Arm Subasm</div><div class="a" style="left:119.5px;top:549px;width:18px;height:18px;background:#1f3661;border-radius:4px;"></div><svg class="a" style="left:119.5px;top:549px;" width="18" height="18" viewBox="0 0 18 18"><path d="M9 4.5v9M4.5 9h9" stroke="#fff" stroke-width="2.6"/></svg><div class="a" style="left:145.5px;top:548px;width:21px;height:21px;border:1.3px solid #e6e6e6;border-radius:3px;background:#fff;"></div><svg class="a" style="left:180.0px;top:547px;" width="24" height="23" viewBox="0 0 24 23"><g fill="none" stroke="#3f5189" stroke-width="2" stroke-linejoin="round" stroke-linecap="round"><path d="M9.2 0.9 L22.4 6.4 L22.4 17.1 L13.9 22 L1 17.6 L1 5.9 Z"/><path d="M1 5.9 L13.9 10.2 L22.4 6.4"/><path d="M1 11.9 L13.9 15.7 L22.4 11.9"/></g></svg><div class="t " style="top:548.20px;font-size:22px;color:#4862a0;left:211.00px;">Propulsion Subassembly (A) <b style="color:#2f4b8c;font-size:21px;letter-spacing:0.6px;margin-left:2px">(1)</b></div><svg class="a" style="left:796px;top:551px;" width="20" height="15" viewBox="0 0 20 15"><path d="M1.5 8 L7 13 L18.5 1.5" fill="none" stroke="#2c9a3e" stroke-width="2.6"/></svg><svg class="a" style="left:824px;top:548px;" width="18" height="20" viewBox="0 0 18 20"><rect x="0" y="1" width="2.6" height="19" fill="#111"/><rect x="2.6" y="1" width="15" height="10.5" fill="#111"/><g fill="#fff"><rect x="4.5" y="2.6" width="2.5" height="2.5"/><rect x="9.5" y="2.6" width="2.5" height="2.5"/><rect x="7" y="5.2" width="2.5" height="2.5"/><rect x="12" y="5.2" width="2.5" height="2.5"/><rect x="4.5" y="7.8" width="2.5" height="2.2"/><rect x="9.5" y="7.8" width="2.5" height="2.2"/></g></svg><div class="t " style="top:548.20px;font-size:22px;color:#5b6068;left:942.00px;">Subitem</div><div class="t " style="top:548.20px;font-size:22px;color:#5b6068;left:1092.00px;">External</div><div class="t " style="top:548.20px;font-size:22px;color:#5b6068;left:1242.00px;">Solidworks</div><div class="t " style="top:548.20px;font-size:22px;color:#5b6068;left:1392.00px;">Propulsion S...</div><div class="t " style="top:548.20px;font-size:22px;color:#5b6068;left:1544.50px;width:100px;text-align:center;">A</div><div class="a" style="left:1673px;top:543px;width:105px;height:31px;background:#2fa85c;border-radius:8px;"></div><div class="t " style="top:548.88px;font-size:21.2px;color:#f2fff5;left:1673.00px;width:105px;text-align:center;-webkit-text-stroke:0.35px #f2fff5;">Released</div><div class="t " style="top:548.20px;font-size:22px;color:#5b6068;left:1805.50px;width:140px;text-align:center;">Item</div><div class="a" style="left:1954px;top:545px;width:27px;height:27px;background:#3753d8;border-radius:50%;"></div><div class="t " style="top:552.32px;font-size:13px;color:#f4f6ff;left:1952.50px;width:30px;text-align:center;-webkit-text-stroke:0.3px #f4f6ff;">PT</div><div class="t " style="top:548.20px;font-size:22px;color:#5b6068;left:1993.00px;width:107px;overflow:hidden;white-space:nowrap;">PLM tester</div><div class="t " style="top:548.20px;font-size:22px;color:#5b6068;left:2105.00px;width:140px;text-align:center;">Default</div><div class="t " style="top:548.20px;font-size:22px;color:#5b6068;left:2255.00px;">Propulsion Subasm</div><div class="a" style="left:119.5px;top:605px;width:18px;height:18px;background:#1f3661;border-radius:4px;"></div><svg class="a" style="left:119.5px;top:605px;" width="18" height="18" viewBox="0 0 18 18"><path d="M9 4.5v9M4.5 9h9" stroke="#fff" stroke-width="2.6"/></svg><div class="a" style="left:145.5px;top:604px;width:21px;height:21px;border:1.3px solid #e6e6e6;border-radius:3px;background:#fff;"></div><svg class="a" style="left:180.0px;top:603px;" width="24" height="23" viewBox="0 0 24 23"><g fill="none" stroke="#3f5189" stroke-width="2" stroke-linejoin="round" stroke-linecap="round"><path d="M9.2 0.9 L22.4 6.4 L22.4 17.1 L13.9 22 L1 17.6 L1 5.9 Z"/><path d="M1 5.9 L13.9 10.2 L22.4 6.4"/><path d="M1 11.9 L13.9 15.7 L22.4 11.9"/></g></svg><div class="t " style="top:604.45px;font-size:22px;color:#4862a0;left:211.00px;">Arm Subassembly (A) <b style="color:#2f4b8c;font-size:21px;letter-spacing:0.6px;margin-left:2px">(9)</b></div><svg class="a" style="left:796px;top:607px;" width="20" height="15" viewBox="0 0 20 15"><path d="M1.5 8 L7 13 L18.5 1.5" fill="none" stroke="#2c9a3e" stroke-width="2.6"/></svg><svg class="a" style="left:824px;top:604px;" width="18" height="20" viewBox="0 0 18 20"><rect x="0" y="1" width="2.6" height="19" fill="#111"/><rect x="2.6" y="1" width="15" height="10.5" fill="#111"/><g fill="#fff"><rect x="4.5" y="2.6" width="2.5" height="2.5"/><rect x="9.5" y="2.6" width="2.5" height="2.5"/><rect x="7" y="5.2" width="2.5" height="2.5"/><rect x="12" y="5.2" width="2.5" height="2.5"/><rect x="4.5" y="7.8" width="2.5" height="2.2"/><rect x="9.5" y="7.8" width="2.5" height="2.2"/></g></svg><div class="t " style="top:604.45px;font-size:22px;color:#5b6068;left:942.00px;">Subitem</div><div class="t " style="top:604.45px;font-size:22px;color:#5b6068;left:1092.00px;">External</div><div class="t " style="top:604.45px;font-size:22px;color:#5b6068;left:1242.00px;">Solidworks</div><div class="t " style="top:604.45px;font-size:22px;color:#5b6068;left:1392.00px;">Arm Subass...</div><div class="t " style="top:604.45px;font-size:22px;color:#5b6068;left:1544.50px;width:100px;text-align:center;">A</div><div class="a" style="left:1673px;top:599px;width:105px;height:31px;background:#2fa85c;border-radius:8px;"></div><div class="t " style="top:605.13px;font-size:21.2px;color:#f2fff5;left:1673.00px;width:105px;text-align:center;-webkit-text-stroke:0.35px #f2fff5;">Released</div><div class="t " style="top:604.45px;font-size:22px;color:#5b6068;left:1805.50px;width:140px;text-align:center;">Item</div><div class="a" style="left:1954px;top:601px;width:27px;height:27px;background:#3753d8;border-radius:50%;"></div><div class="t " style="top:608.57px;font-size:13px;color:#f4f6ff;left:1952.50px;width:30px;text-align:center;-webkit-text-stroke:0.3px #f4f6ff;">PT</div><div class="t " style="top:604.45px;font-size:22px;color:#5b6068;left:1993.00px;width:107px;overflow:hidden;white-space:nowrap;">PLM tester</div><div class="t " style="top:604.45px;font-size:22px;color:#5b6068;left:2105.00px;width:140px;text-align:center;">Default</div><div class="t " style="top:604.45px;font-size:22px;color:#5b6068;left:2255.00px;">Arm Subasm</div><div class="a" style="left:119.5px;top:662px;width:18px;height:18px;background:#1f3661;border-radius:4px;"></div><svg class="a" style="left:119.5px;top:662px;" width="18" height="18" viewBox="0 0 18 18"><path d="M9 4.5v9M4.5 9h9" stroke="#fff" stroke-width="2.6"/></svg><div class="a" style="left:145.5px;top:661px;width:21px;height:21px;border:1.3px solid #e6e6e6;border-radius:3px;background:#fff;"></div><svg class="a" style="left:180.0px;top:660px;" width="24" height="23" viewBox="0 0 24 23"><g fill="none" stroke="#3f5189" stroke-width="2" stroke-linejoin="round" stroke-linecap="round"><path d="M9.2 0.9 L22.4 6.4 L22.4 17.1 L13.9 22 L1 17.6 L1 5.9 Z"/><path d="M1 5.9 L13.9 10.2 L22.4 6.4"/><path d="M1 11.9 L13.9 15.7 L22.4 11.9"/></g></svg><div class="t " style="top:660.70px;font-size:22px;color:#4862a0;left:211.00px;">Arm Subassembly (A) <b style="color:#2f4b8c;font-size:21px;letter-spacing:0.6px;margin-left:2px">(9)</b></div><svg class="a" style="left:796px;top:664px;" width="20" height="15" viewBox="0 0 20 15"><path d="M1.5 8 L7 13 L18.5 1.5" fill="none" stroke="#2c9a3e" stroke-width="2.6"/></svg><svg class="a" style="left:824px;top:661px;" width="18" height="20" viewBox="0 0 18 20"><rect x="0" y="1" width="2.6" height="19" fill="#111"/><rect x="2.6" y="1" width="15" height="10.5" fill="#111"/><g fill="#fff"><rect x="4.5" y="2.6" width="2.5" height="2.5"/><rect x="9.5" y="2.6" width="2.5" height="2.5"/><rect x="7" y="5.2" width="2.5" height="2.5"/><rect x="12" y="5.2" width="2.5" height="2.5"/><rect x="4.5" y="7.8" width="2.5" height="2.2"/><rect x="9.5" y="7.8" width="2.5" height="2.2"/></g></svg><div class="t " style="top:660.70px;font-size:22px;color:#5b6068;left:942.00px;">Subitem</div><div class="t " style="top:660.70px;font-size:22px;color:#5b6068;left:1092.00px;">External</div><div class="t " style="top:660.70px;font-size:22px;color:#5b6068;left:1242.00px;">Solidworks</div><div class="t " style="top:660.70px;font-size:22px;color:#5b6068;left:1392.00px;">Arm Subass...</div><div class="t " style="top:660.70px;font-size:22px;color:#5b6068;left:1544.50px;width:100px;text-align:center;">A</div><div class="a" style="left:1673px;top:655px;width:105px;height:31px;background:#2fa85c;border-radius:8px;"></div><div class="t " style="top:661.38px;font-size:21.2px;color:#f2fff5;left:1673.00px;width:105px;text-align:center;-webkit-text-stroke:0.35px #f2fff5;">Released</div><div class="t " style="top:660.70px;font-size:22px;color:#5b6068;left:1805.50px;width:140px;text-align:center;">Item</div><div class="a" style="left:1954px;top:657px;width:27px;height:27px;background:#3753d8;border-radius:50%;"></div><div class="t " style="top:664.82px;font-size:13px;color:#f4f6ff;left:1952.50px;width:30px;text-align:center;-webkit-text-stroke:0.3px #f4f6ff;">PT</div><div class="t " style="top:660.70px;font-size:22px;color:#5b6068;left:1993.00px;width:107px;overflow:hidden;white-space:nowrap;">PLM tester</div><div class="t " style="top:660.70px;font-size:22px;color:#5b6068;left:2105.00px;width:140px;text-align:center;">Default</div><div class="t " style="top:660.70px;font-size:22px;color:#5b6068;left:2255.00px;">Arm Subasm</div><div class="a" style="left:119.5px;top:718px;width:18px;height:18px;background:#1f3661;border-radius:4px;"></div><svg class="a" style="left:119.5px;top:718px;" width="18" height="18" viewBox="0 0 18 18"><path d="M9 4.5v9M4.5 9h9" stroke="#fff" stroke-width="2.6"/></svg><div class="a" style="left:145.5px;top:717px;width:21px;height:21px;border:1.3px solid #e6e6e6;border-radius:3px;background:#fff;"></div><svg class="a" style="left:180.0px;top:716px;" width="24" height="23" viewBox="0 0 24 23"><g fill="none" stroke="#3f5189" stroke-width="2" stroke-linejoin="round" stroke-linecap="round"><path d="M9.2 0.9 L22.4 6.4 L22.4 17.1 L13.9 22 L1 17.6 L1 5.9 Z"/><path d="M1 5.9 L13.9 10.2 L22.4 6.4"/><path d="M1 11.9 L13.9 15.7 L22.4 11.9"/></g></svg><div class="t " style="top:716.95px;font-size:22px;color:#4862a0;left:211.00px;">Arm Subassembly (A) <b style="color:#2f4b8c;font-size:21px;letter-spacing:0.6px;margin-left:2px">(9)</b></div><svg class="a" style="left:796px;top:720px;" width="20" height="15" viewBox="0 0 20 15"><path d="M1.5 8 L7 13 L18.5 1.5" fill="none" stroke="#2c9a3e" stroke-width="2.6"/></svg><svg class="a" style="left:824px;top:717px;" width="18" height="20" viewBox="0 0 18 20"><rect x="0" y="1" width="2.6" height="19" fill="#111"/><rect x="2.6" y="1" width="15" height="10.5" fill="#111"/><g fill="#fff"><rect x="4.5" y="2.6" width="2.5" height="2.5"/><rect x="9.5" y="2.6" width="2.5" height="2.5"/><rect x="7" y="5.2" width="2.5" height="2.5"/><rect x="12" y="5.2" width="2.5" height="2.5"/><rect x="4.5" y="7.8" width="2.5" height="2.2"/><rect x="9.5" y="7.8" width="2.5" height="2.2"/></g></svg><div class="t " style="top:716.95px;font-size:22px;color:#5b6068;left:942.00px;">Subitem</div><div class="t " style="top:716.95px;font-size:22px;color:#5b6068;left:1092.00px;">External</div><div class="t " style="top:716.95px;font-size:22px;color:#5b6068;left:1242.00px;">Solidworks</div><div class="t " style="top:716.95px;font-size:22px;color:#5b6068;left:1392.00px;">Arm Subass...</div><div class="t " style="top:716.95px;font-size:22px;color:#5b6068;left:1544.50px;width:100px;text-align:center;">A</div><div class="a" style="left:1673px;top:711px;width:105px;height:31px;background:#2fa85c;border-radius:8px;"></div><div class="t " style="top:717.63px;font-size:21.2px;color:#f2fff5;left:1673.00px;width:105px;text-align:center;-webkit-text-stroke:0.35px #f2fff5;">Released</div><div class="t " style="top:716.95px;font-size:22px;color:#5b6068;left:1805.50px;width:140px;text-align:center;">Item</div><div class="a" style="left:1954px;top:713px;width:27px;height:27px;background:#3753d8;border-radius:50%;"></div><div class="t " style="top:721.07px;font-size:13px;color:#f4f6ff;left:1952.50px;width:30px;text-align:center;-webkit-text-stroke:0.3px #f4f6ff;">PT</div><div class="t " style="top:716.95px;font-size:22px;color:#5b6068;left:1993.00px;width:107px;overflow:hidden;white-space:nowrap;">PLM tester</div><div class="t " style="top:716.95px;font-size:22px;color:#5b6068;left:2105.00px;width:140px;text-align:center;">Default</div><div class="t " style="top:716.95px;font-size:22px;color:#5b6068;left:2255.00px;">Arm Subasm</div><div class="a" style="left:119.5px;top:774px;width:18px;height:18px;background:#1f3661;border-radius:4px;"></div><svg class="a" style="left:119.5px;top:774px;" width="18" height="18" viewBox="0 0 18 18"><path d="M9 4.5v9M4.5 9h9" stroke="#fff" stroke-width="2.6"/></svg><div class="a" style="left:145.5px;top:773px;width:21px;height:21px;border:1.3px solid #e6e6e6;border-radius:3px;background:#fff;"></div><svg class="a" style="left:180.0px;top:772px;" width="24" height="23" viewBox="0 0 24 23"><g fill="none" stroke="#3f5189" stroke-width="2" stroke-linejoin="round" stroke-linecap="round"><path d="M9.2 0.9 L22.4 6.4 L22.4 17.1 L13.9 22 L1 17.6 L1 5.9 Z"/><path d="M1 5.9 L13.9 10.2 L22.4 6.4"/><path d="M1 11.9 L13.9 15.7 L22.4 11.9"/></g></svg><div class="t " style="top:773.20px;font-size:22px;color:#4862a0;left:211.00px;">Propulsion Subassembly (A) <b style="color:#2f4b8c;font-size:21px;letter-spacing:0.6px;margin-left:2px">(1)</b></div><svg class="a" style="left:796px;top:776px;" width="20" height="15" viewBox="0 0 20 15"><path d="M1.5 8 L7 13 L18.5 1.5" fill="none" stroke="#2c9a3e" stroke-width="2.6"/></svg><svg class="a" style="left:824px;top:773px;" width="18" height="20" viewBox="0 0 18 20"><rect x="0" y="1" width="2.6" height="19" fill="#111"/><rect x="2.6" y="1" width="15" height="10.5" fill="#111"/><g fill="#fff"><rect x="4.5" y="2.6" width="2.5" height="2.5"/><rect x="9.5" y="2.6" width="2.5" height="2.5"/><rect x="7" y="5.2" width="2.5" height="2.5"/><rect x="12" y="5.2" width="2.5" height="2.5"/><rect x="4.5" y="7.8" width="2.5" height="2.2"/><rect x="9.5" y="7.8" width="2.5" height="2.2"/></g></svg><div class="t " style="top:773.20px;font-size:22px;color:#5b6068;left:942.00px;">Subitem</div><div class="t " style="top:773.20px;font-size:22px;color:#5b6068;left:1092.00px;">External</div><div class="t " style="top:773.20px;font-size:22px;color:#5b6068;left:1242.00px;">Solidworks</div><div class="t " style="top:773.20px;font-size:22px;color:#5b6068;left:1392.00px;">Propulsion S...</div><div class="t " style="top:773.20px;font-size:22px;color:#5b6068;left:1544.50px;width:100px;text-align:center;">A</div><div class="a" style="left:1673px;top:768px;width:105px;height:31px;background:#2fa85c;border-radius:8px;"></div><div class="t " style="top:773.88px;font-size:21.2px;color:#f2fff5;left:1673.00px;width:105px;text-align:center;-webkit-text-stroke:0.35px #f2fff5;">Released</div><div class="t " style="top:773.20px;font-size:22px;color:#5b6068;left:1805.50px;width:140px;text-align:center;">Item</div><div class="a" style="left:1954px;top:770px;width:27px;height:27px;background:#3753d8;border-radius:50%;"></div><div class="t " style="top:777.32px;font-size:13px;color:#f4f6ff;left:1952.50px;width:30px;text-align:center;-webkit-text-stroke:0.3px #f4f6ff;">PT</div><div class="t " style="top:773.20px;font-size:22px;color:#5b6068;left:1993.00px;width:107px;overflow:hidden;white-space:nowrap;">PLM tester</div><div class="t " style="top:773.20px;font-size:22px;color:#5b6068;left:2105.00px;width:140px;text-align:center;">Default</div><div class="t " style="top:773.20px;font-size:22px;color:#5b6068;left:2255.00px;">Propulsion Subasm</div><div class="a" style="left:119.5px;top:830px;width:18px;height:18px;background:#1f3661;border-radius:4px;"></div><svg class="a" style="left:119.5px;top:830px;" width="18" height="18" viewBox="0 0 18 18"><path d="M9 4.5v9M4.5 9h9" stroke="#fff" stroke-width="2.6"/></svg><div class="a" style="left:145.5px;top:829px;width:21px;height:21px;border:1.3px solid #e6e6e6;border-radius:3px;background:#fff;"></div><svg class="a" style="left:180.0px;top:828px;" width="24" height="23" viewBox="0 0 24 23"><g fill="none" stroke="#3f5189" stroke-width="2" stroke-linejoin="round" stroke-linecap="round"><path d="M9.2 0.9 L22.4 6.4 L22.4 17.1 L13.9 22 L1 17.6 L1 5.9 Z"/><path d="M1 5.9 L13.9 10.2 L22.4 6.4"/><path d="M1 11.9 L13.9 15.7 L22.4 11.9"/></g></svg><div class="t " style="top:829.45px;font-size:22px;color:#4862a0;left:211.00px;">Propulsion Subassembly (A) <b style="color:#2f4b8c;font-size:21px;letter-spacing:0.6px;margin-left:2px">(1)</b></div><svg class="a" style="left:796px;top:832px;" width="20" height="15" viewBox="0 0 20 15"><path d="M1.5 8 L7 13 L18.5 1.5" fill="none" stroke="#2c9a3e" stroke-width="2.6"/></svg><svg class="a" style="left:824px;top:829px;" width="18" height="20" viewBox="0 0 18 20"><rect x="0" y="1" width="2.6" height="19" fill="#111"/><rect x="2.6" y="1" width="15" height="10.5" fill="#111"/><g fill="#fff"><rect x="4.5" y="2.6" width="2.5" height="2.5"/><rect x="9.5" y="2.6" width="2.5" height="2.5"/><rect x="7" y="5.2" width="2.5" height="2.5"/><rect x="12" y="5.2" width="2.5" height="2.5"/><rect x="4.5" y="7.8" width="2.5" height="2.2"/><rect x="9.5" y="7.8" width="2.5" height="2.2"/></g></svg><div class="t " style="top:829.45px;font-size:22px;color:#5b6068;left:942.00px;">Subitem</div><div class="t " style="top:829.45px;font-size:22px;color:#5b6068;left:1092.00px;">External</div><div class="t " style="top:829.45px;font-size:22px;color:#5b6068;left:1242.00px;">Solidworks</div><div class="t " style="top:829.45px;font-size:22px;color:#5b6068;left:1392.00px;">Propulsion S...</div><div class="t " style="top:829.45px;font-size:22px;color:#5b6068;left:1544.50px;width:100px;text-align:center;">A</div><div class="a" style="left:1673px;top:824px;width:105px;height:31px;background:#2fa85c;border-radius:8px;"></div><div class="t " style="top:830.13px;font-size:21.2px;color:#f2fff5;left:1673.00px;width:105px;text-align:center;-webkit-text-stroke:0.35px #f2fff5;">Released</div><div class="t " style="top:829.45px;font-size:22px;color:#5b6068;left:1805.50px;width:140px;text-align:center;">Item</div><div class="a" style="left:1954px;top:826px;width:27px;height:27px;background:#3753d8;border-radius:50%;"></div><div class="t " style="top:833.57px;font-size:13px;color:#f4f6ff;left:1952.50px;width:30px;text-align:center;-webkit-text-stroke:0.3px #f4f6ff;">PT</div><div class="t " style="top:829.45px;font-size:22px;color:#5b6068;left:1993.00px;width:107px;overflow:hidden;white-space:nowrap;">PLM tester</div><div class="t " style="top:829.45px;font-size:22px;color:#5b6068;left:2105.00px;width:140px;text-align:center;">Default</div><div class="t " style="top:829.45px;font-size:22px;color:#5b6068;left:2255.00px;">Propulsion Subasm</div><div class="a" style="left:119.5px;top:887px;width:18px;height:18px;background:#1f3661;border-radius:4px;"></div><svg class="a" style="left:119.5px;top:887px;" width="18" height="18" viewBox="0 0 18 18"><path d="M9 4.5v9M4.5 9h9" stroke="#fff" stroke-width="2.6"/></svg><div class="a" style="left:145.5px;top:886px;width:21px;height:21px;border:1.3px solid #e6e6e6;border-radius:3px;background:#fff;"></div><svg class="a" style="left:180.0px;top:885px;" width="24" height="23" viewBox="0 0 24 23"><g fill="none" stroke="#3f5189" stroke-width="2" stroke-linejoin="round" stroke-linecap="round"><path d="M9.2 0.9 L22.4 6.4 L22.4 17.1 L13.9 22 L1 17.6 L1 5.9 Z"/><path d="M1 5.9 L13.9 10.2 L22.4 6.4"/><path d="M1 11.9 L13.9 15.7 L22.4 11.9"/></g></svg><div class="t " style="top:885.70px;font-size:22px;color:#4862a0;left:211.00px;">Propulsion Subassembly (A) <b style="color:#2f4b8c;font-size:21px;letter-spacing:0.6px;margin-left:2px">(1)</b></div><svg class="a" style="left:796px;top:889px;" width="20" height="15" viewBox="0 0 20 15"><path d="M1.5 8 L7 13 L18.5 1.5" fill="none" stroke="#2c9a3e" stroke-width="2.6"/></svg><svg class="a" style="left:824px;top:886px;" width="18" height="20" viewBox="0 0 18 20"><rect x="0" y="1" width="2.6" height="19" fill="#111"/><rect x="2.6" y="1" width="15" height="10.5" fill="#111"/><g fill="#fff"><rect x="4.5" y="2.6" width="2.5" height="2.5"/><rect x="9.5" y="2.6" width="2.5" height="2.5"/><rect x="7" y="5.2" width="2.5" height="2.5"/><rect x="12" y="5.2" width="2.5" height="2.5"/><rect x="4.5" y="7.8" width="2.5" height="2.2"/><rect x="9.5" y="7.8" width="2.5" height="2.2"/></g></svg><div class="t " style="top:885.70px;font-size:22px;color:#5b6068;left:942.00px;">Subitem</div><div class="t " style="top:885.70px;font-size:22px;color:#5b6068;left:1092.00px;">External</div><div class="t " style="top:885.70px;font-size:22px;color:#5b6068;left:1242.00px;">Solidworks</div><div class="t " style="top:885.70px;font-size:22px;color:#5b6068;left:1392.00px;">Propulsion S...</div><div class="t " style="top:885.70px;font-size:22px;color:#5b6068;left:1544.50px;width:100px;text-align:center;">A</div><div class="a" style="left:1673px;top:880px;width:105px;height:31px;background:#2fa85c;border-radius:8px;"></div><div class="t " style="top:886.38px;font-size:21.2px;color:#f2fff5;left:1673.00px;width:105px;text-align:center;-webkit-text-stroke:0.35px #f2fff5;">Released</div><div class="t " style="top:885.70px;font-size:22px;color:#5b6068;left:1805.50px;width:140px;text-align:center;">Item</div><div class="a" style="left:1954px;top:882px;width:27px;height:27px;background:#3753d8;border-radius:50%;"></div><div class="t " style="top:889.82px;font-size:13px;color:#f4f6ff;left:1952.50px;width:30px;text-align:center;-webkit-text-stroke:0.3px #f4f6ff;">PT</div><div class="t " style="top:885.70px;font-size:22px;color:#5b6068;left:1993.00px;width:107px;overflow:hidden;white-space:nowrap;">PLM tester</div><div class="t " style="top:885.70px;font-size:22px;color:#5b6068;left:2105.00px;width:140px;text-align:center;">Default</div><div class="t " style="top:885.70px;font-size:22px;color:#5b6068;left:2255.00px;">Propulsion Subasm</div><div class="a" style="left:119.5px;top:943px;width:18px;height:18px;background:#1f3661;border-radius:4px;"></div><svg class="a" style="left:119.5px;top:943px;" width="18" height="18" viewBox="0 0 18 18"><path d="M5.5 9h7" stroke="#fff" stroke-width="2.6"/></svg><div class="a" style="left:145.5px;top:942px;width:21px;height:21px;border:1.3px solid #e6e6e6;border-radius:3px;background:#fff;"></div><svg class="a" style="left:180.0px;top:941px;" width="24" height="23" viewBox="0 0 24 23"><g fill="none" stroke="#3f5189" stroke-width="2" stroke-linejoin="round" stroke-linecap="round"><path d="M9.2 0.9 L22.4 6.4 L22.4 17.1 L13.9 22 L1 17.6 L1 5.9 Z"/><path d="M1 5.9 L13.9 10.2 L22.4 6.4"/><path d="M1 11.9 L13.9 15.7 L22.4 11.9"/></g></svg><div class="t " style="top:941.95px;font-size:22px;color:#4862a0;left:211.00px;">Drone Harness Subassembly (A) <b style="color:#2f4b8c;font-size:21px;letter-spacing:0.6px;margin-left:2px">(3)</b></div><svg class="a" style="left:796px;top:945px;" width="20" height="15" viewBox="0 0 20 15"><path d="M1.5 8 L7 13 L18.5 1.5" fill="none" stroke="#2c9a3e" stroke-width="2.6"/></svg><svg class="a" style="left:824px;top:942px;" width="18" height="20" viewBox="0 0 18 20"><rect x="0" y="1" width="2.6" height="19" fill="#111"/><rect x="2.6" y="1" width="15" height="10.5" fill="#111"/><g fill="#fff"><rect x="4.5" y="2.6" width="2.5" height="2.5"/><rect x="9.5" y="2.6" width="2.5" height="2.5"/><rect x="7" y="5.2" width="2.5" height="2.5"/><rect x="12" y="5.2" width="2.5" height="2.5"/><rect x="4.5" y="7.8" width="2.5" height="2.2"/><rect x="9.5" y="7.8" width="2.5" height="2.2"/></g></svg><div class="t " style="top:941.95px;font-size:22px;color:#5b6068;left:942.00px;">Subitem</div><div class="t " style="top:941.95px;font-size:22px;color:#5b6068;left:1092.00px;">Internal</div><div class="t " style="top:941.95px;font-size:22px;color:#5b6068;left:1392.00px;">relation_7857</div><div class="t " style="top:941.95px;font-size:22px;color:#5b6068;left:1544.50px;width:100px;text-align:center;">A</div><div class="a" style="left:1673px;top:936px;width:105px;height:31px;background:#2fa85c;border-radius:8px;"></div><div class="t " style="top:942.63px;font-size:21.2px;color:#f2fff5;left:1673.00px;width:105px;text-align:center;-webkit-text-stroke:0.35px #f2fff5;">Released</div><div class="t " style="top:941.95px;font-size:22px;color:#5b6068;left:1805.50px;width:140px;text-align:center;">Item</div><div class="a" style="left:1954px;top:938px;width:27px;height:27px;background:#3753d8;border-radius:50%;"></div><div class="t " style="top:946.07px;font-size:13px;color:#f4f6ff;left:1952.50px;width:30px;text-align:center;-webkit-text-stroke:0.3px #f4f6ff;">PT</div><div class="t " style="top:941.95px;font-size:22px;color:#5b6068;left:1993.00px;width:107px;overflow:hidden;white-space:nowrap;">PLM tester</div><div class="t " style="top:941.95px;font-size:22px;color:#5b6068;left:2105.00px;width:140px;text-align:center;">Default</div><div class="t " style="top:941.95px;font-size:22px;color:#5b6068;left:2255.00px;">Drone Wiring &amp; Har...</div><div class="a" style="left:146.5px;top:999px;width:18px;height:18px;background:#1f3661;border-radius:4px;"></div><svg class="a" style="left:146.5px;top:999px;" width="18" height="18" viewBox="0 0 18 18"><path d="M9 4.5v9M4.5 9h9" stroke="#fff" stroke-width="2.6"/></svg><div class="a" style="left:172.5px;top:998px;width:21px;height:21px;border:1.3px solid #e6e6e6;border-radius:3px;background:#fff;"></div><svg class="a" style="left:207.0px;top:997px;" width="24" height="23" viewBox="0 0 24 23"><g fill="none" stroke="#3f5189" stroke-width="2" stroke-linejoin="round" stroke-linecap="round"><path d="M9.2 0.9 L22.4 6.4 L22.4 17.1 L13.9 22 L1 17.6 L1 5.9 Z"/><path d="M1 5.9 L13.9 10.2 L22.4 6.4"/><path d="M1 11.9 L13.9 15.7 L22.4 11.9"/></g></svg><div class="t " style="top:998.20px;font-size:22px;color:#4862a0;left:238.00px;">Drone Single cable Bundle (A)</div><svg class="a" style="left:796px;top:1001px;" width="20" height="15" viewBox="0 0 20 15"><path d="M1.5 8 L7 13 L18.5 1.5" fill="none" stroke="#2c9a3e" stroke-width="2.6"/></svg><svg class="a" style="left:824px;top:998px;" width="18" height="20" viewBox="0 0 18 20"><rect x="0" y="1" width="2.6" height="19" fill="#111"/><rect x="2.6" y="1" width="15" height="10.5" fill="#111"/><g fill="#fff"><rect x="4.5" y="2.6" width="2.5" height="2.5"/><rect x="9.5" y="2.6" width="2.5" height="2.5"/><rect x="7" y="5.2" width="2.5" height="2.5"/><rect x="12" y="5.2" width="2.5" height="2.5"/><rect x="4.5" y="7.8" width="2.5" height="2.2"/><rect x="9.5" y="7.8" width="2.5" height="2.2"/></g></svg><div class="t " style="top:998.20px;font-size:22px;color:#5b6068;left:942.00px;">Subitem</div><div class="t " style="top:998.20px;font-size:22px;color:#5b6068;left:1092.00px;">Internal</div><div class="t " style="top:998.20px;font-size:22px;color:#5b6068;left:1392.00px;">relation_7843</div><div class="t " style="top:998.20px;font-size:22px;color:#5b6068;left:1544.50px;width:100px;text-align:center;">A</div><div class="a" style="left:1673px;top:993px;width:105px;height:31px;background:#2fa85c;border-radius:8px;"></div><div class="t " style="top:998.88px;font-size:21.2px;color:#f2fff5;left:1673.00px;width:105px;text-align:center;-webkit-text-stroke:0.35px #f2fff5;">Released</div><div class="t " style="top:998.20px;font-size:22px;color:#5b6068;left:1805.50px;width:140px;text-align:center;">Item</div><div class="a" style="left:1954px;top:995px;width:27px;height:27px;background:#3753d8;border-radius:50%;"></div><div class="t " style="top:1002.32px;font-size:13px;color:#f4f6ff;left:1952.50px;width:30px;text-align:center;-webkit-text-stroke:0.3px #f4f6ff;">PT</div><div class="t " style="top:998.20px;font-size:22px;color:#5b6068;left:1993.00px;width:107px;overflow:hidden;white-space:nowrap;">PLM tester</div><div class="t " style="top:998.20px;font-size:22px;color:#5b6068;left:2105.00px;width:140px;text-align:center;">Default</div><div class="t " style="top:998.20px;font-size:22px;color:#5b6068;left:2255.00px;">Drone Single cable ...</div><div class="a" style="left:146.5px;top:1055px;width:18px;height:18px;background:#1f3661;border-radius:4px;"></div><svg class="a" style="left:146.5px;top:1055px;" width="18" height="18" viewBox="0 0 18 18"><path d="M9 4.5v9M4.5 9h9" stroke="#fff" stroke-width="2.6"/></svg><div class="a" style="left:172.5px;top:1054px;width:21px;height:21px;border:1.3px solid #e6e6e6;border-radius:3px;background:#fff;"></div><svg class="a" style="left:207.0px;top:1053px;" width="24" height="23" viewBox="0 0 24 23"><g fill="none" stroke="#3f5189" stroke-width="2" stroke-linejoin="round" stroke-linecap="round"><path d="M9.2 0.9 L22.4 6.4 L22.4 17.1 L13.9 22 L1 17.6 L1 5.9 Z"/><path d="M1 5.9 L13.9 10.2 L22.4 6.4"/><path d="M1 11.9 L13.9 15.7 L22.4 11.9"/></g></svg><div class="t " style="top:1054.45px;font-size:22px;color:#4862a0;left:238.00px;">Connection Plugs (A)</div><svg class="a" style="left:796px;top:1057px;" width="20" height="15" viewBox="0 0 20 15"><path d="M1.5 8 L7 13 L18.5 1.5" fill="none" stroke="#2c9a3e" stroke-width="2.6"/></svg><svg class="a" style="left:824px;top:1054px;" width="18" height="20" viewBox="0 0 18 20"><rect x="0" y="1" width="2.6" height="19" fill="#111"/><rect x="2.6" y="1" width="15" height="10.5" fill="#111"/><g fill="#fff"><rect x="4.5" y="2.6" width="2.5" height="2.5"/><rect x="9.5" y="2.6" width="2.5" height="2.5"/><rect x="7" y="5.2" width="2.5" height="2.5"/><rect x="12" y="5.2" width="2.5" height="2.5"/><rect x="4.5" y="7.8" width="2.5" height="2.2"/><rect x="9.5" y="7.8" width="2.5" height="2.2"/></g></svg><div class="t " style="top:1054.45px;font-size:22px;color:#5b6068;left:942.00px;">Subitem</div><div class="t " style="top:1054.45px;font-size:22px;color:#5b6068;left:1092.00px;">Internal</div><div class="t " style="top:1054.45px;font-size:22px;color:#5b6068;left:1392.00px;">relation_7845</div><div class="t " style="top:1054.45px;font-size:22px;color:#5b6068;left:1544.50px;width:100px;text-align:center;">A</div><div class="a" style="left:1673px;top:1049px;width:105px;height:31px;background:#2fa85c;border-radius:8px;"></div><div class="t " style="top:1055.13px;font-size:21.2px;color:#f2fff5;left:1673.00px;width:105px;text-align:center;-webkit-text-stroke:0.35px #f2fff5;">Released</div><div class="t " style="top:1054.45px;font-size:22px;color:#5b6068;left:1805.50px;width:140px;text-align:center;">Item</div><div class="a" style="left:1954px;top:1051px;width:27px;height:27px;background:#3753d8;border-radius:50%;"></div><div class="t " style="top:1058.57px;font-size:13px;color:#f4f6ff;left:1952.50px;width:30px;text-align:center;-webkit-text-stroke:0.3px #f4f6ff;">PT</div><div class="t " style="top:1054.45px;font-size:22px;color:#5b6068;left:1993.00px;width:107px;overflow:hidden;white-space:nowrap;">PLM tester</div><div class="t " style="top:1054.45px;font-size:22px;color:#5b6068;left:2105.00px;width:140px;text-align:center;">Default</div><div class="t " style="top:1054.45px;font-size:22px;color:#5b6068;left:2255.00px;">Connection plugs</div><div class="a" style="left:146.5px;top:1112px;width:18px;height:18px;background:#1f3661;border-radius:4px;"></div><svg class="a" style="left:146.5px;top:1112px;" width="18" height="18" viewBox="0 0 18 18"><path d="M9 4.5v9M4.5 9h9" stroke="#fff" stroke-width="2.6"/></svg><div class="a" style="left:172.5px;top:1111px;width:21px;height:21px;border:1.3px solid #e6e6e6;border-radius:3px;background:#fff;"></div><svg class="a" style="left:207.0px;top:1110px;" width="24" height="23" viewBox="0 0 24 23"><g fill="none" stroke="#3f5189" stroke-width="2" stroke-linejoin="round" stroke-linecap="round"><path d="M9.2 0.9 L22.4 6.4 L22.4 17.1 L13.9 22 L1 17.6 L1 5.9 Z"/><path d="M1 5.9 L13.9 10.2 L22.4 6.4"/><path d="M1 11.9 L13.9 15.7 L22.4 11.9"/></g></svg><div class="t " style="top:1110.70px;font-size:22px;color:#4862a0;left:238.00px;">Heat Shrink Sleeves (A)</div><svg class="a" style="left:796px;top:1114px;" width="20" height="15" viewBox="0 0 20 15"><path d="M1.5 8 L7 13 L18.5 1.5" fill="none" stroke="#2c9a3e" stroke-width="2.6"/></svg><svg class="a" style="left:824px;top:1111px;" width="18" height="20" viewBox="0 0 18 20"><rect x="0" y="1" width="2.6" height="19" fill="#111"/><rect x="2.6" y="1" width="15" height="10.5" fill="#111"/><g fill="#fff"><rect x="4.5" y="2.6" width="2.5" height="2.5"/><rect x="9.5" y="2.6" width="2.5" height="2.5"/><rect x="7" y="5.2" width="2.5" height="2.5"/><rect x="12" y="5.2" width="2.5" height="2.5"/><rect x="4.5" y="7.8" width="2.5" height="2.2"/><rect x="9.5" y="7.8" width="2.5" height="2.2"/></g></svg><div class="t " style="top:1110.70px;font-size:22px;color:#5b6068;left:942.00px;">Subitem</div><div class="t " style="top:1110.70px;font-size:22px;color:#5b6068;left:1092.00px;">Internal</div><div class="t " style="top:1110.70px;font-size:22px;color:#5b6068;left:1392.00px;">relation_7847</div><div class="t " style="top:1110.70px;font-size:22px;color:#5b6068;left:1544.50px;width:100px;text-align:center;">A</div><div class="a" style="left:1673px;top:1105px;width:105px;height:31px;background:#2fa85c;border-radius:8px;"></div><div class="t " style="top:1111.38px;font-size:21.2px;color:#f2fff5;left:1673.00px;width:105px;text-align:center;-webkit-text-stroke:0.35px #f2fff5;">Released</div><div class="t " style="top:1110.70px;font-size:22px;color:#5b6068;left:1805.50px;width:140px;text-align:center;">Item</div><div class="a" style="left:1954px;top:1107px;width:27px;height:27px;background:#3753d8;border-radius:50%;"></div><div class="t " style="top:1114.82px;font-size:13px;color:#f4f6ff;left:1952.50px;width:30px;text-align:center;-webkit-text-stroke:0.3px #f4f6ff;">PT</div><div class="t " style="top:1110.70px;font-size:22px;color:#5b6068;left:1993.00px;width:107px;overflow:hidden;white-space:nowrap;">PLM tester</div><div class="t " style="top:1110.70px;font-size:22px;color:#5b6068;left:2105.00px;width:140px;text-align:center;">Default</div><div class="t " style="top:1110.70px;font-size:22px;color:#5b6068;left:2255.00px;">Heat Shrinks</div><svg class="a" style="left:98.6px;top:182.8px;" width="20.1" height="19.7" viewBox="0 0 20 20"><g fill="none" stroke="#575c67" stroke-width="2.2" stroke-linecap="round" stroke-linejoin="round"><path d="M8 1.3H4A2.7 2.7 0 0 0 1.3 4V16A2.7 2.7 0 0 0 4 18.7H16A2.7 2.7 0 0 0 18.7 16V11"/><path d="M12.5 1.3H18.7V7.5"/><path d="M18.2 1.8L10.5 9.5"/></g></svg><svg class="a" style="left:124.5px;top:191.8px;" width="12" height="8" viewBox="0 0 12 8"><path d="M1.3 1.3 L6 6.3 L10.7 1.3" fill="none" stroke="#575c67" stroke-width="2.6" stroke-linecap="round" stroke-linejoin="round"/></svg><svg class="a" style="left:179px;top:182.8px;" width="20" height="20" viewBox="0 0 20 20"><g fill="#575c67"><path d="M1.2 16.2 L12.6 4.8 L15.2 7.4 L3.8 18.8 L0.8 19.5 Z"/><path d="M13.9 3.5 L15.6 1.8 a1.2 1.2 0 0 1 1.7 0 L18.4 2.9 a1.2 1.2 0 0 1 0 1.7 L16.6 6.2 Z"/></g></svg><svg class="a" style="left:205.3px;top:191.8px;" width="12" height="8" viewBox="0 0 12 8"><path d="M1.3 1.3 L6 6.3 L10.7 1.3" fill="none" stroke="#575c67" stroke-width="2.6" stroke-linecap="round" stroke-linejoin="round"/></svg><svg class="a" style="left:263px;top:180.7px;" width="19.4" height="21.8" viewBox="0 0 19.4 21.8"><g fill="none" stroke="#575c67" stroke-width="2" stroke-linecap="round" stroke-linejoin="round"><rect x="1.2" y="3" width="17" height="17.5" rx="1.5"/><path d="M6 3h7.5v2.5H6z"/><circle cx="9.7" cy="2" r="1" fill="#575c67"/><path d="M5.5 12l3 3 5.7-6"/></g></svg><svg class="a" style="left:288.5px;top:191.8px;" width="12" height="8" viewBox="0 0 12 8"><path d="M1.3 1.3 L6 6.3 L10.7 1.3" fill="none" stroke="#575c67" stroke-width="2.6" stroke-linecap="round" stroke-linejoin="round"/></svg><svg class="a" style="left:348px;top:181.3px;" width="17" height="22.5" viewBox="0 0 17 22.5"><g fill="none" stroke="#575c67" stroke-width="2" stroke-linecap="round" stroke-linejoin="round"><rect x="1.2" y="9.5" width="14.6" height="11.8" rx="1.5"/><path d="M4 9.5V5.5a4.5 4.5 0 0 1 9 0v4"/><circle cx="8.5" cy="15.3" r="0.9" fill="#575c67"/></g></svg><svg class="a" style="left:372.7px;top:191.8px;" width="12" height="8" viewBox="0 0 12 8"><path d="M1.3 1.3 L6 6.3 L10.7 1.3" fill="none" stroke="#575c67" stroke-width="2.6" stroke-linecap="round" stroke-linejoin="round"/></svg><svg class="a" style="left:427.5px;top:181.3px;" width="22.9" height="24.2" viewBox="0 0 22.9 24.2"><g fill="none" stroke="#575c67" stroke-width="1.9" stroke-linecap="round" stroke-linejoin="round"><ellipse cx="9" cy="4" rx="7.8" ry="2.9"/><path d="M1.2 4v15.2c0 1.6 3.3 2.9 7.3 2.9"/><path d="M16.8 4v8"/><circle cx="17.5" cy="18.5" r="2.3"/><path d="M17.5 13.8v1.4M17.5 21.8v1.4M12.8 18.5h1.4M20.8 18.5h1.4M14.2 15.2l1 1M19.8 20.8l1 1M14.2 21.8l1-1M19.8 16.2l1-1"/></g></svg><svg class="a" style="left:453.5px;top:191.8px;" width="12" height="8" viewBox="0 0 12 8"><path d="M1.3 1.3 L6 6.3 L10.7 1.3" fill="none" stroke="#575c67" stroke-width="2.6" stroke-linecap="round" stroke-linejoin="round"/></svg><svg class="a" style="left:517.3px;top:182.6px;" width="21.1" height="21.2" viewBox="0 0 21.1 21.2"><g fill="none" stroke="#575c67" stroke-width="1.9" stroke-linecap="round" stroke-linejoin="round"><path d="M5.5 15.5V1.5M1.3 5.7L5.5 1.5l4.2 4.2"/><path d="M15.5 5.5v14.5M11.3 15.8l4.2 4.2 4.2-4.2"/></g></svg><svg class="a" style="left:544.3px;top:191.8px;" width="12" height="8" viewBox="0 0 12 8"><path d="M1.3 1.3 L6 6.3 L10.7 1.3" fill="none" stroke="#575c67" stroke-width="2.6" stroke-linecap="round" stroke-linejoin="round"/></svg><svg class="a" style="left:621px;top:184px;" width="18" height="18" viewBox="0 0 18 18"><g fill="none" stroke="#575c67" stroke-width="2.3" stroke-linecap="round" stroke-linejoin="round"><path d="M8 17V10.5C8 8 6 6.5 2 2"/><path d="M1.3 6.5V1.5H6"/><path d="M16.5 1.5L11.5 6.5"/><path d="M11.8 1.5h4.7v4.7"/></g></svg><svg class="a" style="left:645.8px;top:191.8px;" width="12" height="8" viewBox="0 0 12 8"><path d="M1.3 1.3 L6 6.3 L10.7 1.3" fill="none" stroke="#575c67" stroke-width="2.6" stroke-linecap="round" stroke-linejoin="round"/></svg><svg class="a" style="left:711.9px;top:182.2px;" width="22.0" height="21.6" viewBox="0 0 22 21.6"><g fill="none" stroke="#575c67" stroke-width="2.1" stroke-linecap="round" stroke-linejoin="round"><circle cx="11" cy="10.8" r="9.7"/><path d="M11 5.8v10M6 10.8h10"/></g></svg><svg class="a" style="left:738.4px;top:191.8px;" width="12" height="8" viewBox="0 0 12 8"><path d="M1.3 1.3 L6 6.3 L10.7 1.3" fill="none" stroke="#575c67" stroke-width="2.6" stroke-linecap="round" stroke-linejoin="round"/></svg><svg class="a" style="left:795.9px;top:183px;" width="17.9" height="19" viewBox="0 0 17.9 19"><g fill="none" stroke="#575c67" stroke-width="2.1" stroke-linecap="round" stroke-linejoin="round"><path d="M9 1.3H1.3V18L6 15.3 10.7 18V9.5"/><path d="M14.5 1.3v5M12 3.8h5"/></g></svg><svg class="a" style="left:819.4px;top:191.8px;" width="12" height="8" viewBox="0 0 12 8"><path d="M1.3 1.3 L6 6.3 L10.7 1.3" fill="none" stroke="#575c67" stroke-width="2.6" stroke-linecap="round" stroke-linejoin="round"/></svg><svg class="a" style="left:882.1px;top:180.8px;" width="24.3" height="24.2" viewBox="0 0 24.3 24.2"><g fill="none" stroke="#575c67" stroke-width="2" stroke-linecap="round" stroke-linejoin="round"><circle cx="12.1" cy="4.2" r="3"/><circle cx="4.2" cy="19.9" r="3"/><circle cx="19.9" cy="19.9" r="3"/><path d="M12.1 7.2V11M4.2 16.9V11H19.9v5.9"/></g></svg><svg class="a" style="left:910.4px;top:191.8px;" width="12" height="8" viewBox="0 0 12 8"><path d="M1.3 1.3 L6 6.3 L10.7 1.3" fill="none" stroke="#575c67" stroke-width="2.6" stroke-linecap="round" stroke-linejoin="round"/></svg><svg class="a" style="left:981.4px;top:181.7px;" width="15.7" height="21.2" viewBox="0 0 15.7 21.2"><g fill="none" stroke="#575c67" stroke-width="2" stroke-linecap="round" stroke-linejoin="round"><path d="M12.3 8v7.2a5.5 5.5 0 0 1-11 0v-2.5l2.8 2.5"/><circle cx="12.3" cy="5.5" r="2.1"/><path d="M12.3 0.8v2.4"/></g></svg><svg class="a" style="left:1004.8px;top:191.8px;" width="12" height="8" viewBox="0 0 12 8"><path d="M1.3 1.3 L6 6.3 L10.7 1.3" fill="none" stroke="#575c67" stroke-width="2.6" stroke-linecap="round" stroke-linejoin="round"/></svg><svg class="a" style="left:1077px;top:181.7px;" width="21.7" height="22.1" viewBox="0 0 21.7 22.1"><g fill="none" stroke="#575c67" stroke-width="1.9" stroke-linecap="round" stroke-linejoin="round"><circle cx="10.85" cy="11.05" r="9.8"/><path d="M14.5 8.5a4.5 4.5 0 0 0-7.5-1.2l-0.8 1.3"/><path d="M7.2 13.6a4.5 4.5 0 0 0 7.5 1.2l0.8-1.3"/><path d="M6 5.8v3h3M15.8 16.3v-3h-3"/></g></svg><svg class="a" style="left:1104px;top:191.8px;" width="12" height="8" viewBox="0 0 12 8"><path d="M1.3 1.3 L6 6.3 L10.7 1.3" fill="none" stroke="#575c67" stroke-width="2.6" stroke-linecap="round" stroke-linejoin="round"/></svg><svg class="a" style="left:1171.2px;top:181.7px;" width="22.5" height="22.5" viewBox="0 0 22.5 22.5"><g fill="none" stroke="#575c67" stroke-width="1.9" stroke-linecap="round" stroke-linejoin="round"><path d="M11.5 5.8H2.5A1.3 1.3 0 0 0 1.2 7.1v8.3A1.3 1.3 0 0 0 2.5 16.7h9"/><path d="M11.5 1.3v20M8.5 1.3h6M8.5 21.3h6"/><path d="M17 6a3 3 0 0 1 3 3v4.5a3 3 0 0 1-3 3"/><rect x="4.5" y="9.3" width="6" height="3.8" fill="#575c67" stroke="none"/></g></svg><svg class="a" style="left:1198.6px;top:191.8px;" width="12" height="8" viewBox="0 0 12 8"><path d="M1.3 1.3 L6 6.3 L10.7 1.3" fill="none" stroke="#575c67" stroke-width="2.6" stroke-linecap="round" stroke-linejoin="round"/></svg><svg class="a" style="left:1259.7px;top:184px;" width="25.2" height="18.9" viewBox="0 0 25.2 18.9"><g fill="none" stroke="#575c67" stroke-width="1.9" stroke-linecap="round" stroke-linejoin="round"><path d="M10.5 11.8a4.3 4.3 0 0 0 6 0l5.6-5.6a4.3 4.3 0 0 0-6-6L13.5 2.6"/><path d="M14.5 7.1a4.3 4.3 0 0 0-6 0L2.9 12.7a4.3 4.3 0 0 0 6 6l2.4-2.4"/></g></svg><svg class="a" style="left:1335.2px;top:182.2px;" width="21.1" height="22.4" viewBox="0 0 21.1 22.4"><g fill="none" stroke="#575c67" stroke-width="2" stroke-linecap="round" stroke-linejoin="round"><ellipse cx="9.5" cy="4" rx="8.3" ry="2.9"/><path d="M1.2 4v15c0 1.7 3.5 3 7.5 3"/><path d="M17.8 4v8"/><path d="M1.2 11.5c0 1.7 3.5 3 8.3 3"/><path d="M13 21.5l6.5-6.5M15 15h4.5v4.5"/></g></svg><svg class="a" style="left:1408.9px;top:183px;" width="17.9" height="19.9" viewBox="0 0 17.9 19.9"><g fill="none" stroke="#575c67" stroke-width="1.8" stroke-linecap="round" stroke-linejoin="round"><path d="M1.3 16.3h15.3C15 14.5 14.5 12.5 14.5 8.7A5.6 5.6 0 0 0 3.3 8.7C3.3 12.5 2.8 14.5 1.3 16.3Z"/><path d="M7.2 18.3a1.8 1.8 0 0 0 3.5 0"/></g></svg><svg class="a" style="left:1479px;top:181.7px;" width="22" height="22.1" viewBox="0 0 22 22.1"><g fill="none" stroke="#575c67" stroke-width="2.1" stroke-linecap="round" stroke-linejoin="round"><rect x="5.7" y="5.7" width="15" height="15" rx="3"/><path d="M3.3 16.5A2 2 0 0 1 1.3 14.5V4.3a3 3 0 0 1 3-3h10.2a2 2 0 0 1 2 2"/></g></svg><svg class="a" style="left:1584px;top:180.8px;" width="21.6" height="24.3" viewBox="0 0 21.6 24.3"><g fill="none" stroke="#575c67" stroke-width="1.8" stroke-linecap="round" stroke-linejoin="round"><rect x="1.3" y="1.3" width="8" height="4.5" rx="2.2"/><rect x="11.3" y="10" width="9" height="4.5" rx="2.2"/><rect x="11.3" y="18.8" width="9" height="4.5" rx="2.2"/><path d="M5.3 5.8C5.3 8 6.5 8.2 8.5 8.2H13.8C15.8 8.2 15.8 9 15.8 10M15.8 14.5v4.3"/></g></svg><svg class="a" style="left:2058.8px;top:180.7px;" width="20.3" height="18.3" viewBox="0 0 20.3 18.3"><g fill="#2f3237"><path d="M5 0.3h10.3L13.8 3.3H6.5Z"/><path d="M5 18h10.3L13.8 15H6.5Z"/><path d="M0.3 3.5L3.8 5.2V13.2L0.3 14.8Z"/><path d="M20 3.5L16.5 5.2V13.2L20 14.8Z"/></g><circle cx="10.15" cy="9.15" r="4" fill="none" stroke="#2f3237" stroke-width="2.3"/></svg><svg class="a" style="left:2130.4px;top:179.1px;" width="20.8" height="20.9" viewBox="0 0 20.8 20.9"><g fill="none" stroke="#383b40" stroke-width="1.6" stroke-linecap="round" stroke-linejoin="round"><circle cx="6.5" cy="6.8" r="5.5"/><circle cx="18" cy="5.7" r="2"/><circle cx="15.5" cy="14.5" r="2"/><circle cx="5.8" cy="18.5" r="2"/><path d="M11.8 5.8H16M10 11l4 2.5M6.5 12.3v4.2"/></g></svg><svg class="a" style="left:2203.5px;top:179.6px;" width="20.3" height="19.9" viewBox="0 0 20.3 19.9"><g fill="none" stroke="#2f3237" stroke-width="2.2" stroke-linecap="round" stroke-linejoin="round"><circle cx="10.15" cy="9.95" r="9"/><path d="M10.15 4.9v10.1M5.1 9.95h10.1"/></g></svg><svg class="a" style="left:2275.6px;top:181.7px;" width="18.3" height="16.2" viewBox="0 0 18.3 16.2"><g fill="none" stroke="#4b4f55" stroke-width="1.4" stroke-linecap="round" stroke-linejoin="round"><rect x="0.9" y="0.9" width="16.5" height="14.4" rx="1.2"/><path d="M11 4.2h4.3M11 7.3h4.3M3.5 11.5h11.5"/><rect x="3.5" y="3.8" width="2.5" height="4.3" fill="#383b40" stroke="none"/></g></svg><svg class="a" style="left:2344.5px;top:177px;" width="23.0" height="22" viewBox="0 0 23 22"><g fill="none" stroke="#2f3237" stroke-width="1.5" stroke-linecap="round" stroke-linejoin="round"><circle cx="11.5" cy="2.3" r="1.7"/><path d="M11.5 4v2.8M4.5 9V6.8h14V9"/><circle cx="4.5" cy="10.8" r="1.8"/><circle cx="18.5" cy="10.8" r="1.8"/><path d="M4.5 12.6v2.2M2 17.8V14.8h5v3M16 17.8V14.8h5v3"/><circle cx="2" cy="19.6" r="1.7"/><circle cx="7" cy="19.6" r="1.7"/><circle cx="16" cy="19.6" r="1.7"/><circle cx="21" cy="19.6" r="1.7"/><path d="M18.5 12.6v2.2"/></g></svg><svg class="a" style="left:2410.2px;top:179.8px;" width="15.8" height="19.7" viewBox="0 0 15.8 19.7"><g fill="none" stroke="#2f3237" stroke-width="2" stroke-linecap="round" stroke-linejoin="round"><path d="M4.5 7.8H1.2V18.5H14.6V7.8H11.3"/><path d="M7.9 12.5V1.5M4.5 4.8l3.4-3.4 3.4 3.4"/></g></svg><svg class="a" style="left:2483.7px;top:181.2px;" width="18.3" height="18.8" viewBox="0 0 18.3 18.75"><g fill="none" stroke="#2f3237" stroke-width="1.5" stroke-linecap="round" stroke-linejoin="round"><path d="M10 16.8H2a1.2 1.2 0 0 1-1.2-1.2V2A1.2 1.2 0 0 1 2 0.8h12.3A1.2 1.2 0 0 1 15.5 2v8"/><path d="M0.8 5.3H15.5M0.8 10.3h9M5.5 0.8v16M10.5 0.8v9"/></g></svg><svg class="a" style="left:2491px;top:191.5px;" width="11.5" height="11.5" viewBox="0 0 11.5 11.5"><g fill="#2f3237"><circle cx="5.75" cy="5.75" r="3.6"/><path d="M5.75 0L7 2.5H4.5ZM5.75 11.5L7 9H4.5ZM0 5.75L2.5 4.5V7ZM11.5 5.75L9 4.5V7ZM1.6 1.6L4 2.6 2.6 4ZM9.9 9.9L7.5 8.9 8.9 7.5ZM1.6 9.9L2.6 7.5 4 8.9ZM9.9 1.6L8.9 4 7.5 2.6Z"/></g><circle cx="5.75" cy="5.75" r="1.4" fill="#fff"/></svg><svg class="a" style="left:19px;top:191.8px;" width="24.9" height="19.2" viewBox="0 0 24.9 19.2"><g fill="none" stroke="#1b3059" stroke-width="2.2" stroke-linecap="round" stroke-linejoin="round"><rect x="1.2" y="1.2" width="22.5" height="16.8" rx="1.5"/><path d="M15 1.2h8.7v6.3H15z" fill="#1b3059"/></g></svg><svg class="a" style="left:17.5px;top:243.8px;" width="27.2" height="26.4" viewBox="0 0 27.2 26.4"><g fill="none" stroke="#1b3059" stroke-width="2.3" stroke-linecap="round" stroke-linejoin="round"><path d="M2 2.5h23.2c0.8 0 1.2 0.9 0.7 1.5L17 14v9.8c0 0.7-0.6 1.2-1.3 1.2h-2.9c-0.8 0-1.3-0.5-1.3-1.2V14L1.3 4C0.8 3.4 1.2 2.5 2 2.5z"/></g></svg><svg class="a" style="left:18.6px;top:305.4px;" width="25.3" height="13.6" viewBox="0 0 25.3 13.6"><g fill="none" stroke="#1b3059" stroke-width="2" stroke-linecap="round" stroke-linejoin="round"><path d="M7 1.6h16.8M7 6.8h16.8M7 12h16.8" stroke-width="2.8"/><circle cx="1.6" cy="1.6" r="1.1" fill="#1b3059"/><circle cx="1.6" cy="6.8" r="1.1" fill="#1b3059"/><circle cx="1.6" cy="12" r="1.1" fill="#1b3059"/></g></svg><svg class="a" style="left:21px;top:356.6px;" width="20.5" height="23.2" viewBox="0 0 20.5 23.2"><g fill="none" stroke="#1b3059" stroke-width="1.9" stroke-linecap="round" stroke-linejoin="round"><rect x="1.1" y="3" width="18.3" height="19" rx="1.5"/><rect x="6" y="1" width="8.5" height="3.5" rx="1.6"/><path d="M4.5 8.5h7M4.5 11.8h10M4.5 15h6M4.5 18.2h9"/></g></svg><svg class="a" style="left:18.6px;top:413.6px;" width="25.3" height="25.3" viewBox="0 0 25.3 25.3"><g fill="none" stroke="#8a6bd1" stroke-width="1.9" stroke-linecap="round" stroke-linejoin="round"><rect x="1.2" y="1.2" width="22.9" height="22.9" rx="3"/><path d="M5 4.8h15.3M11 10.5h9M11 17h9"/><circle cx="6.5" cy="10.5" r="1.6"/><circle cx="6.5" cy="17" r="1.6"/></g></svg><svg class="a" style="left:17.8px;top:470.4px;" width="26.9" height="24.0" viewBox="0 0 26.9 24"><g fill="none" stroke="#23759a" stroke-width="2.3" stroke-linecap="round" stroke-linejoin="round"><rect x="1.5" y="1.5" width="23.9" height="21" rx="4"/><path d="M1.5 8.5h23.9M1.5 15.5h23.9M9.5 8.5v14M17.5 8.5v14"/></g></svg><svg class="a" style="left:21.8px;top:523.2px;" width="21.2" height="28.0" viewBox="0 0 21.2 28"><g fill="none" stroke="#d8b660" stroke-width="1.6" stroke-linecap="round" stroke-linejoin="round"><rect x="1" y="1" width="6" height="6" rx="1.2"/><rect x="14.2" y="11" width="6" height="6" rx="1.2"/><rect x="14.2" y="21" width="6" height="6" rx="1.2"/><path d="M4 7v17h10.2M4 14h10.2"/></g></svg><svg class="a" style="left:19px;top:583.2px;" width="24.4" height="21.6" viewBox="0 0 24.4 21.6"><g fill="none" stroke="#e2955a" stroke-width="1.7" stroke-linecap="round" stroke-linejoin="round"><rect x="1" y="1" width="22.4" height="19.6" rx="1.2"/><path d="M1 9.5h7.5M8.5 1v19.6M8.5 11.5h7.5M16 1v19.6M16 9.5h7.4"/></g></svg><svg class="a" style="left:19.7px;top:636px;" width="22.9" height="24.8" viewBox="0 0 22.9 24.8"><g fill="none" stroke="#cc5d8d" stroke-width="1.8" stroke-linecap="round" stroke-linejoin="round"><path d="M11.5 24v-6l5.5-8v-8M15.5 4.8 17 2l2.7 2.8"/><path d="M11.5 18 8 12M6.5 9.5 5 4M2.5 6.8 5 2l2.5 2.8"/></g></svg><svg class="a" style="left:19.4px;top:693.3px;" width="23.2" height="22.7" viewBox="0 0 23.2 22.7"><g fill="none" stroke="#2f7fa5" stroke-width="1.8" stroke-linecap="round" stroke-linejoin="round"><rect x="1" y="1" width="5.5" height="5.5" rx="1.2"/><rect x="16.5" y="15.7" width="5.5" height="5.5" rx="1.2"/><path d="M3.75 6.5v8M3.75 14.5l-3 3 3 3 3-3z M6.75 17.5h9.75"/></g></svg><svg class="a" style="left:20.2px;top:748.8px;" width="21.9" height="21.6" viewBox="0 0 21.9 21.6"><g fill="none" stroke="#dd8a45" stroke-width="1.6" stroke-linecap="round" stroke-linejoin="round"><rect x="1" y="1" width="19.9" height="19.6" rx="1.5"/><path d="M1 1h19.9v3.5H1z" fill="#dd8a45"/><path d="M5 12.5c3.5-4 8.4-4 11.9 0-3.5 4-8.4 4-11.9 0z"/><circle cx="10.95" cy="12.5" r="1" fill="#dd8a45"/></g></svg><svg class="a" style="left:18.6px;top:805.6px;" width="25.1" height="18.4" viewBox="0 0 25.1 18.4"><g fill="none" stroke="#2e9fc4" stroke-width="1.9" stroke-linecap="round" stroke-linejoin="round"><path d="M1 14.5h10.5M7.5 10.5l4 4-4 4"/><path d="M24 4.5H13.5M17.5 0.8l-4 3.7 4 3.7"/></g></svg><svg class="a" style="left:18.8px;top:858px;" width="24.9" height="24.8" viewBox="0 0 24.9 24.8"><g fill="none" stroke="#9c77d2" stroke-width="1.9" stroke-linecap="round" stroke-linejoin="round"><rect x="1" y="1" width="22.9" height="22.8" rx="2.5"/><path d="M5.5 6.5h6M9.5 11.5h6M13.5 17h6"/></g></svg><svg class="a" style="left:19.7px;top:914.3px;" width="23.0" height="22.4" viewBox="0 0 23 22.4"><g fill="none" stroke="#66686d" stroke-width="1.8" stroke-linecap="round" stroke-linejoin="round"><path d="M3.5 6.5A10 10 0 1 1 2.3 13"/><path d="M1.3 2.5v4.5h4.5M12 6.5v5.5l4 4"/></g></svg><svg class="a" style="left:19.7px;top:970.3px;" width="23.0" height="22.4" viewBox="0 0 23 22.4"><g fill="none" stroke="#2f8a91" stroke-width="1.9" stroke-linecap="round" stroke-linejoin="round"><rect x="1" y="1" width="21" height="20.4" rx="1.5"/><path d="M7 9v7.5M11.5 6v10.5M16 13v3.5"/></g></svg><svg class="a" style="left:18.8px;top:1026.3px;" width="24.9" height="20.4" viewBox="0 0 24.9 20.4"><g fill="none" stroke="#8369c8" stroke-width="1.7" stroke-linecap="round" stroke-linejoin="round"><path d="M1.2 19.2A11.2 11.2 0 0 1 23.7 19.2z"/><path d="M11 15.5l7.5-8" stroke-width="2.5"/></g></svg><svg class="a" style="left:17.6px;top:1076.2px;" width="29.1" height="30.5" viewBox="0 0 29.1 30.5"><g fill="none" stroke="#2296d5" stroke-width="2" stroke-linecap="round" stroke-linejoin="round"><path d="M18 5.5H2.5A1.5 1.5 0 0 0 1 7v12.5A1.5 1.5 0 0 0 2.5 21h21.5a1.5 1.5 0 0 0 1.5-1.5V14.5"/><path d="M9.5 21v5M17 21v5M6 28.5h14.5"/><circle cx="22.5" cy="7" r="6" fill="#2296d5" stroke="none"/><path d="M19.5 6.5a3 3 0 0 1 5.5-1M25.5 7.5a3 3 0 0 1-5.5 1" stroke="#fff" stroke-width="1.3"/></g></svg><svg class="a" style="left:696px;top:324px;" width="31" height="16" viewBox="0 0 31 16"><g stroke="#231a1d" stroke-linecap="round" fill="none" stroke-width="1.5"><path d="M15 8.5L3 3.5"/><path d="M15 8.5L28 10"/><path d="M15 8.5L10 14.5"/><path d="M15 8.5L21 2.5"/></g><g fill="#2a1f22"><ellipse cx="3" cy="3.5" rx="2.5" ry="1.2"/><ellipse cx="28" cy="10" rx="2.5" ry="1.2"/><ellipse cx="10" cy="14.5" rx="2.5" ry="1.2"/><ellipse cx="21" cy="2.5" rx="2.2" ry="1"/><ellipse cx="15" cy="8.5" rx="3.5" ry="2.5"/></g><path d="M2 2.5l2 2M26.5 9l3 2" stroke="#7a3a3a" stroke-width="0.8"/></svg><svg class="a" style="left:698.5px;top:378px;" width="26" height="22" viewBox="0 0 26 22"><rect x="1" y="1" width="24" height="11" rx="2" fill="#2a2a2a"/><rect x="1" y="11" width="24" height="10" rx="2" fill="#6e6e6e"/><path d="M3 14h20M3 18h20" stroke="#bdbdbd" stroke-width="1.2"/><path d="M1 6h24" stroke="#3a3a3a"/></svg><svg class="a" style="left:698.5px;top:439px;" width="27" height="14" viewBox="0 0 27 14"><path d="M1.5 3c3-2 8-1 11 0.5 4 0.5 8-2.5 13-0.5v5H1.5z" fill="#161111"/><path d="M3.5 6v5.5M8.5 6v6.5M19.5 6v5.5M24 6v6.5" stroke="#1d1515" stroke-width="3"/></svg><svg class="a" style="left:694px;top:493px;" width="34" height="17" viewBox="0 0 34 17"><path d="M2 8.5C5 7.5 9 6.5 12 6.5" stroke="#8e2b3b" stroke-width="2.3" fill="none" stroke-linecap="round"/><path d="M4 13.5L28 10" stroke="#c9cbca" stroke-width="1.4"/><rect x="11" y="6" width="5.5" height="6.5" rx="1" fill="#1a1a1a"/><path d="M16 10.5L25 6" stroke="#6f7a74" stroke-width="2.6"/><path d="M17 7.5L24 4.5" stroke="#d8d8d8" stroke-width="1"/><rect x="24.5" y="1.5" width="4.5" height="6.5" rx="1.5" fill="#3a3a3a"/></svg><svg class="a" style="left:697.5px;top:549px;" width="26" height="18" viewBox="0 0 26 18"><path d="M4.5 4.5 L20.5 2 L21.5 13.5 L5.5 16 Z" fill="#0c0c0c"/><g fill="#a88a4a"><rect x="1" y="6" width="3.5" height="2"/><rect x="1" y="9.5" width="3.5" height="2"/><rect x="1.5" y="13" width="3.5" height="2"/><rect x="21" y="3.5" width="3" height="2"/><rect x="21.5" y="7" width="3" height="2"/><rect x="21.5" y="10.5" width="3" height="2"/></g></svg><svg class="a" style="left:694px;top:605px;" width="34" height="17" viewBox="0 0 34 17"><path d="M2 8.5C5 7.5 9 6.5 12 6.5" stroke="#8e2b3b" stroke-width="2.3" fill="none" stroke-linecap="round"/><path d="M4 13.5L28 10" stroke="#c9cbca" stroke-width="1.4"/><rect x="11" y="6" width="5.5" height="6.5" rx="1" fill="#1a1a1a"/><path d="M16 10.5L25 6" stroke="#6f7a74" stroke-width="2.6"/><path d="M17 7.5L24 4.5" stroke="#d8d8d8" stroke-width="1"/><rect x="24.5" y="1.5" width="4.5" height="6.5" rx="1.5" fill="#3a3a3a"/></svg><svg class="a" style="left:694px;top:662px;" width="34" height="17" viewBox="0 0 34 17"><path d="M2 8.5C5 7.5 9 6.5 12 6.5" stroke="#8e2b3b" stroke-width="2.3" fill="none" stroke-linecap="round"/><path d="M4 13.5L28 10" stroke="#c9cbca" stroke-width="1.4"/><rect x="11" y="6" width="5.5" height="6.5" rx="1" fill="#1a1a1a"/><path d="M16 10.5L25 6" stroke="#6f7a74" stroke-width="2.6"/><path d="M17 7.5L24 4.5" stroke="#d8d8d8" stroke-width="1"/><rect x="24.5" y="1.5" width="4.5" height="6.5" rx="1.5" fill="#3a3a3a"/></svg><svg class="a" style="left:694px;top:718px;" width="34" height="17" viewBox="0 0 34 17"><path d="M2 8.5C5 7.5 9 6.5 12 6.5" stroke="#8e2b3b" stroke-width="2.3" fill="none" stroke-linecap="round"/><path d="M4 13.5L28 10" stroke="#c9cbca" stroke-width="1.4"/><rect x="11" y="6" width="5.5" height="6.5" rx="1" fill="#1a1a1a"/><path d="M16 10.5L25 6" stroke="#6f7a74" stroke-width="2.6"/><path d="M17 7.5L24 4.5" stroke="#d8d8d8" stroke-width="1"/><rect x="24.5" y="1.5" width="4.5" height="6.5" rx="1.5" fill="#3a3a3a"/></svg><svg class="a" style="left:697.5px;top:774px;" width="26" height="18" viewBox="0 0 26 18"><path d="M4.5 4.5 L20.5 2 L21.5 13.5 L5.5 16 Z" fill="#0c0c0c"/><g fill="#a88a4a"><rect x="1" y="6" width="3.5" height="2"/><rect x="1" y="9.5" width="3.5" height="2"/><rect x="1.5" y="13" width="3.5" height="2"/><rect x="21" y="3.5" width="3" height="2"/><rect x="21.5" y="7" width="3" height="2"/><rect x="21.5" y="10.5" width="3" height="2"/></g></svg><svg class="a" style="left:697.5px;top:830px;" width="26" height="18" viewBox="0 0 26 18"><path d="M4.5 4.5 L20.5 2 L21.5 13.5 L5.5 16 Z" fill="#0c0c0c"/><g fill="#a88a4a"><rect x="1" y="6" width="3.5" height="2"/><rect x="1" y="9.5" width="3.5" height="2"/><rect x="1.5" y="13" width="3.5" height="2"/><rect x="21" y="3.5" width="3" height="2"/><rect x="21.5" y="7" width="3" height="2"/><rect x="21.5" y="10.5" width="3" height="2"/></g></svg><svg class="a" style="left:697.5px;top:887px;" width="26" height="18" viewBox="0 0 26 18"><path d="M4.5 4.5 L20.5 2 L21.5 13.5 L5.5 16 Z" fill="#0c0c0c"/><g fill="#a88a4a"><rect x="1" y="6" width="3.5" height="2"/><rect x="1" y="9.5" width="3.5" height="2"/><rect x="1.5" y="13" width="3.5" height="2"/><rect x="21" y="3.5" width="3" height="2"/><rect x="21.5" y="7" width="3" height="2"/><rect x="21.5" y="10.5" width="3" height="2"/></g></svg><svg class="a" style="left:691px;top:929px;" width="45" height="45" viewBox="0 0 45 45"><defs><clipPath id="ch"><rect x="0" y="0" width="45" height="45" rx="8.5"/></clipPath></defs><g clip-path="url(#ch)"><rect width="45" height="45" fill="#e2d6b6"/><rect y="0" width="45" height="7" fill="#9a8d6c"/><ellipse cx="33" cy="4" rx="8" ry="3" fill="#5a4526"/><rect y="7" width="45" height="3" fill="#c9c2a8"/><path d="M0 10.5h45v5.5H0z" fill="#1f1f1d"/><path d="M6 11.5h25" stroke="#8a8a80" stroke-width="1"/><path d="M0 16.5h45v2.5H0z" fill="#4d6b32"/><path d="M0 19h45v4H0z" fill="#ddd08e"/><path d="M0 23h45v5H0z" fill="#27252b"/><path d="M28 24h17v4H28z" fill="#d8cda0"/><path d="M0 28h45v3.5H0z" fill="#2e2c30"/><path d="M0 31.5h45v3.5H0z" fill="#7a3324"/><path d="M0 31.5h14v3.5H0z" fill="#c98950"/><path d="M0 35h45v2.5H0z" fill="#3b3b36"/><path d="M0 37.5h45v3H0z" fill="#566f3c"/><path d="M0 40.5h45v4.5H0z" fill="#e6dcc0"/></g></svg><svg class="a" style="left:691px;top:986px;" width="45" height="45" viewBox="0 0 45 45"><defs><clipPath id="cc"><rect x="0" y="0" width="45" height="45" rx="8.5"/></clipPath></defs><g clip-path="url(#cc)"><rect width="45" height="45" fill="#2a2a2a"/><path d="M0 5c10-4 30-5 45 2" stroke="#555" stroke-width="4" fill="none"/><path d="M2 12c12-6 28-6 42 0" stroke="#d8d8d8" stroke-width="1.6" fill="none"/><path d="M0 17c12-5 26-4 45 3" stroke="#0e0e0e" stroke-width="4" fill="none"/><path d="M3 21c10-3 25-3 40 2" stroke="#b9b9b9" stroke-width="1.3" fill="none"/><rect x="21" y="14" width="8" height="12" fill="#080808" transform="rotate(-25 25 20)"/><path d="M0 27c15-3 30-1 45 1" stroke="#111" stroke-width="3.5" fill="none"/><path d="M2 31h30" stroke="#8a8a8a" stroke-width="1.2"/><circle cx="36" cy="32" r="3" fill="#060606"/><path d="M0 37c15 1 30 2 45-3" stroke="#1a1a1a" stroke-width="3" fill="none"/><path d="M0 41h45v4H0z" fill="#a9a9a9"/><path d="M40 0v45h5V0z" fill="#b5b5b5" opacity="0.6"/><path d="M0 0h12v5H0z" fill="#9a4a4a" opacity="0.8"/></g></svg><svg class="a" style="left:691px;top:1042px;" width="45" height="45" viewBox="0 0 45 45"><defs><clipPath id="ch"><rect x="0" y="0" width="45" height="45" rx="8.5"/></clipPath></defs><g clip-path="url(#ch)"><rect width="45" height="45" fill="#e2d6b6"/><rect y="0" width="45" height="7" fill="#9a8d6c"/><ellipse cx="33" cy="4" rx="8" ry="3" fill="#5a4526"/><rect y="7" width="45" height="3" fill="#c9c2a8"/><path d="M0 10.5h45v5.5H0z" fill="#1f1f1d"/><path d="M6 11.5h25" stroke="#8a8a80" stroke-width="1"/><path d="M0 16.5h45v2.5H0z" fill="#4d6b32"/><path d="M0 19h45v4H0z" fill="#ddd08e"/><path d="M0 23h45v5H0z" fill="#27252b"/><path d="M28 24h17v4H28z" fill="#d8cda0"/><path d="M0 28h45v3.5H0z" fill="#2e2c30"/><path d="M0 31.5h45v3.5H0z" fill="#7a3324"/><path d="M0 31.5h14v3.5H0z" fill="#c98950"/><path d="M0 35h45v2.5H0z" fill="#3b3b36"/><path d="M0 37.5h45v3H0z" fill="#566f3c"/><path d="M0 40.5h45v4.5H0z" fill="#e6dcc0"/></g></svg><svg class="a" style="left:691px;top:1098px;" width="45" height="45" viewBox="0 0 45 45"><defs><clipPath id="cs"><rect x="0" y="0" width="45" height="45" rx="8.5"/></clipPath></defs><g clip-path="url(#cs)"><rect width="45" height="45" fill="#8e1e0e"/><g stroke-width="3.5"><path d="M1 45L6 0" stroke="#c8321a"/><path d="M6 45L11 0" stroke="#e8702a"/><path d="M11 45L16 4" stroke="#2e7a22"/><path d="M16 45L20 0" stroke="#d9401c"/><path d="M21 45L25 0" stroke="#b52a14"/><path d="M26 45L30 0" stroke="#ec8a30"/><path d="M31 45L35 0" stroke="#3a8a2a"/><path d="M36 45L40 0" stroke="#cf3a1a"/><path d="M41 45L45 0" stroke="#e6782a"/></g><ellipse cx="23" cy="6" rx="11" ry="6" fill="#4fb03a" opacity="0.85"/><ellipse cx="36" cy="9" rx="5" ry="4" fill="#f0b040" opacity="0.7"/><path d="M0 34h45v11H0z" fill="#2a0804" opacity="0.45"/></g></svg><div class="a" style="left:2497px;top:276px;width:38px;height:38px;border:1.3px solid #a597c8;border-radius:5px;background:#fff;"></div><div class="a" style="left:2497px;top:332px;width:38px;height:38px;border:1.3px solid #7189bd;border-radius:5px;background:#fff;"></div><div class="a" style="left:2497px;top:390px;width:38px;height:38px;border:1.3px solid #68ad84;border-radius:5px;background:#fff;"></div><div class="a" style="left:2497px;top:446px;width:38px;height:38px;border:1.3px solid #8c8c8c;border-radius:5px;background:#fff;"></div><div class="a" style="left:2497px;top:503px;width:38px;height:38px;border:1.3px solid #66a99f;border-radius:5px;background:#fff;"></div><div class="a" style="left:2497px;top:560px;width:38px;height:38px;border:1.3px solid #dca57a;border-radius:5px;background:#fff;"></div><svg class="a" style="left:2503px;top:282px;" width="26" height="26" viewBox="0 0 26 26"><circle cx="13" cy="13" r="11" fill="none" stroke="#8a72c8" stroke-width="1.6"/><path d="M13 11.5v7" stroke="#8a72c8" stroke-width="1.8"/><circle cx="13" cy="8" r="1.2" fill="#8a72c8"/></svg><svg class="a" style="left:2503px;top:338px;" width="26" height="26" viewBox="0 0 26 26"><g fill="none" stroke="#3f6fc6" stroke-width="1.7" stroke-linecap="round"><path d="M6 9.5A9 9 0 0 1 20 6"/><path d="M20.5 2.5v4h-4"/><path d="M21.5 16A9 9 0 0 1 8 20.5"/><path d="M7.5 24v-4h4"/><path d="M4.5 17A9 9 0 0 1 4 11"/><path d="M2 14l2.5 3 2.5-3"/></g></svg><svg class="a" style="left:2503px;top:396px;" width="26" height="26" viewBox="0 0 26 26"><g fill="none" stroke="#1f9a4e" stroke-width="3" stroke-linecap="round"><path d="M10 8H7a5 5 0 0 0 0 10h3"/><path d="M16 8h3a5 5 0 0 1 0 10h-3"/><path d="M8.5 13h9"/></g></svg><svg class="a" style="left:2503px;top:452px;" width="26" height="26" viewBox="0 0 26 26"><g fill="none" stroke="#707070" stroke-width="1.7" stroke-linecap="round"><path d="M5 8A9.5 9.5 0 1 1 3.6 14"/><path d="M3 4v4.5h4.5"/><path d="M13 8v5.5l3.5 3.5"/></g></svg><svg class="a" style="left:2503px;top:509px;" width="26" height="26" viewBox="0 0 26 26"><g fill="none" stroke="#2a9a8a" stroke-width="1.7" stroke-linecap="round"><circle cx="13" cy="10" r="3.5"/><path d="M6.5 22v-2.5a4 4 0 0 1 4-4h5a4 4 0 0 1 4 4V22z"/><path d="M6 11a2.5 2.5 0 1 1 1.5-5"/><path d="M20 11a2.5 2.5 0 1 0-1.5-5"/><path d="M2.5 17.5a3.5 3.5 0 0 1 3-3M23.5 17.5a3.5 3.5 0 0 0-3-3"/></g></svg><svg class="a" style="left:2503px;top:566px;" width="26" height="26" viewBox="0 0 26 26"><g fill="none" stroke="#d9843a" stroke-width="1.6"><rect x="3.5" y="4" width="19" height="18" rx="1"/><path d="M3.5 4h19v3h-19z" fill="#d9843a"/><path d="M7.5 14.5c3-3.2 8-3.2 11 0-3 3.2-8 3.2-11 0z"/><circle cx="13" cy="14.5" r="1" fill="#d9843a"/></g></svg><div class="a" style="left:2465px;top:767px;width:24px;height:48px;background:#9ea2a9;border-radius:7px 0 0 7px;"></div><svg class="a" style="left:2472px;top:781px;" width="10" height="20" viewBox="0 0 10 20"><path d="M7.5 2L2.5 10l5 8" fill="none" stroke="#fff" stroke-width="1.6" stroke-linecap="round"/></svg><div class="a" style="left:2550px;top:120px;width:8px;height:1253px;background:#9a9a9a;border-radius:4px;"></div><div class="a" style="left:75px;top:1358px;width:846px;height:9px;background:#7b7d7f;border-radius:0 2px 2px 0;"></div><div class="a" style="left:1285px;top:1344px;width:47px;height:24px;background:#9ea2a9;border-radius:6px 6px 0 0;"></div><svg class="a" style="left:1298px;top:1349px;" width="20" height="12" viewBox="0 0 20 12"><path d="M2 9.5L10 2.5l8 7" fill="none" stroke="#fff" stroke-width="1.8" stroke-linecap="round"/></svg>
</body></html>
